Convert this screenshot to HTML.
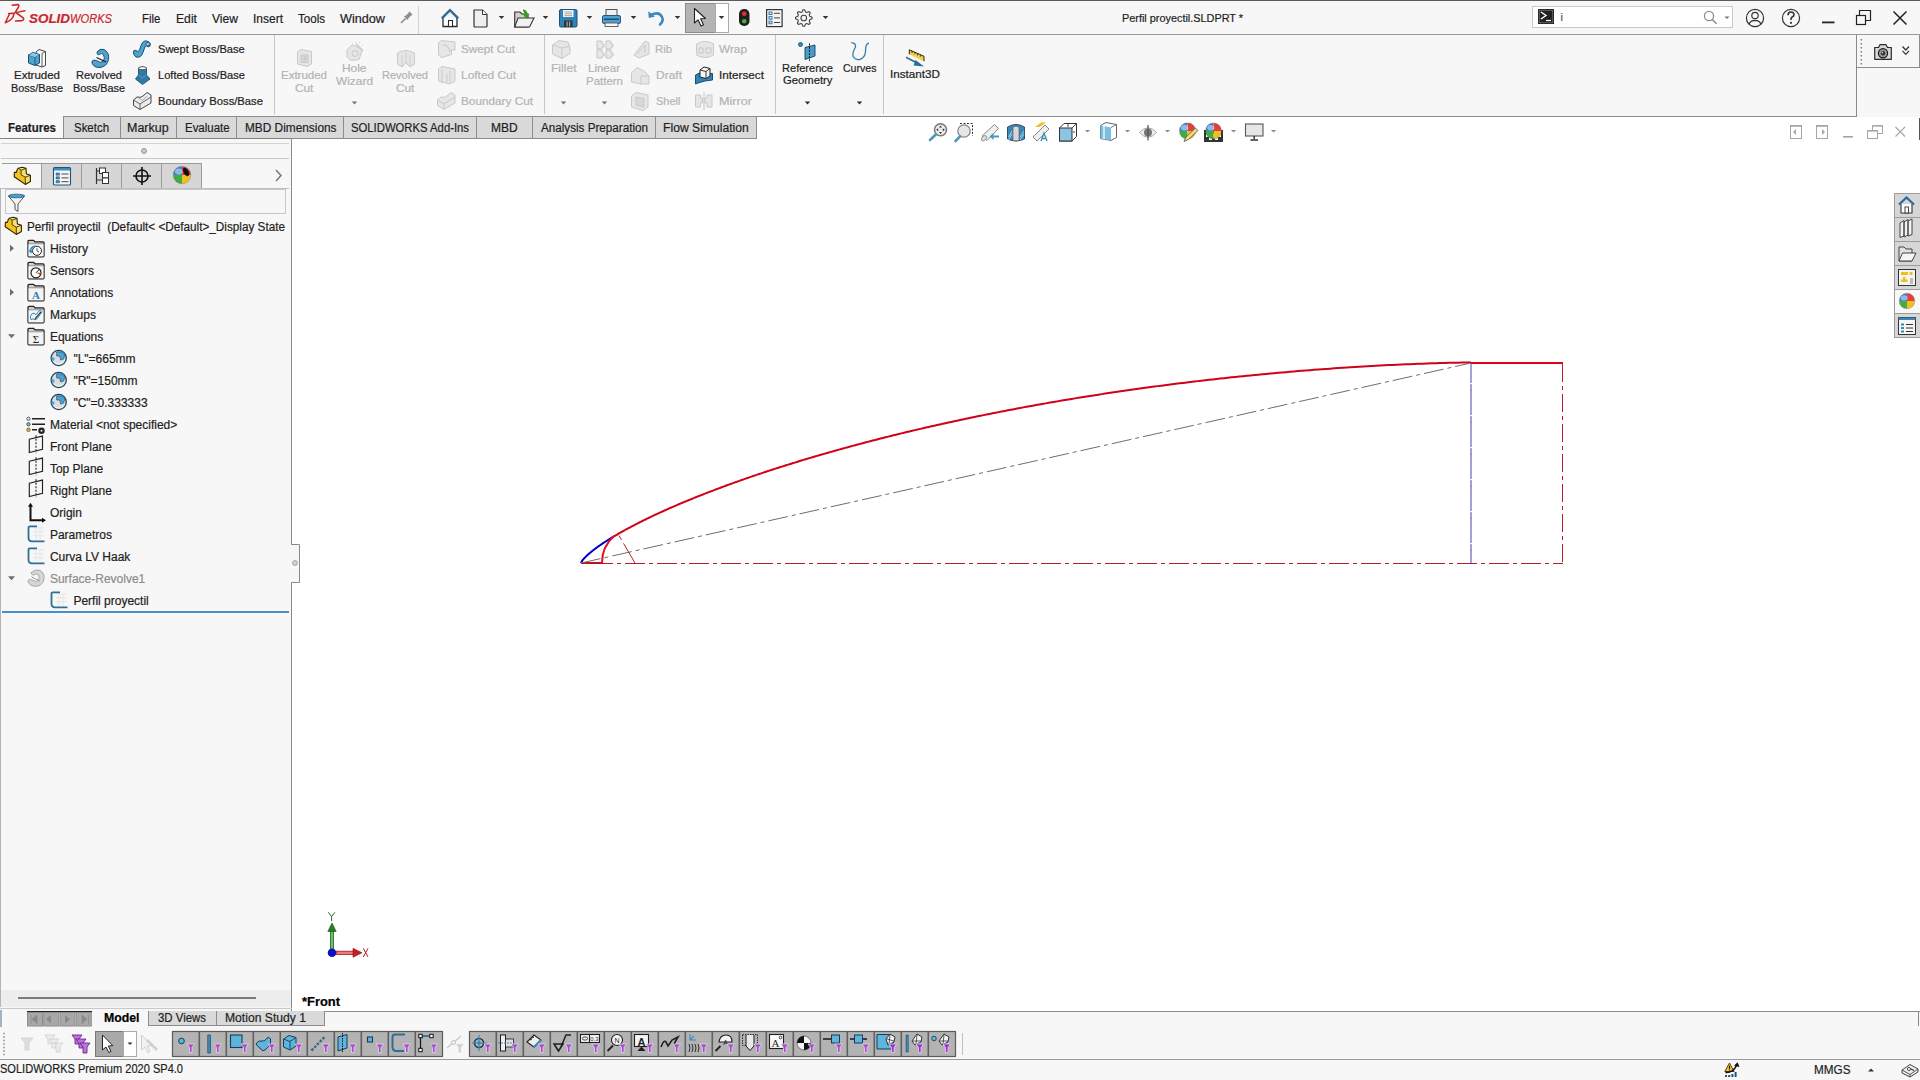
<!DOCTYPE html>
<html><head><meta charset="utf-8"><title>SOLIDWORKS</title>
<style>
html,body{margin:0;padding:0;width:1920px;height:1080px;overflow:hidden;background:#f7f7f7;font-family:"Liberation Sans",sans-serif}
.t{position:absolute;white-space:pre;line-height:1;transform-origin:0 0;font-family:"Liberation Sans",sans-serif;-webkit-text-stroke:0.2px currentColor}
svg{position:absolute;left:0;top:0}
</style></head><body>
<div style="position:absolute;left:0px;top:0px;width:1920px;height:35px;background:#f7f7f7"></div><div style="position:absolute;left:0px;top:0px;width:1920px;height:1px;background:#5a5a5a"></div><div style="position:absolute;left:0px;top:34px;width:1920px;height:1px;background:#9a9a9a"></div><div style="position:absolute;left:418px;top:6px;width:1px;height:28px;background:#d0d0d0"></div><div style="position:absolute;left:1532px;top:6px;width:201px;height:22px;background:#fff;border:1px solid #c8c8c8;box-sizing:border-box"></div><div style="position:absolute;left:0px;top:35px;width:1857px;height:82px;background:#f7f7f7"></div><div style="position:absolute;left:63px;top:116px;width:1794px;height:1px;background:#8a8a8a"></div><div style="position:absolute;left:1856px;top:35px;width:1px;height:82px;background:#8a8a8a"></div><div style="position:absolute;left:1857px;top:35px;width:63px;height:33px;background:#f7f7f7;border:1px solid #8c8c8c;border-top:none;border-left:none;box-sizing:border-box"></div><div style="position:absolute;left:274px;top:35px;width:1px;height:79px;background:#c6c6c6"></div><div style="position:absolute;left:544px;top:35px;width:1px;height:79px;background:#c6c6c6"></div><div style="position:absolute;left:775px;top:35px;width:1px;height:79px;background:#c6c6c6"></div><div style="position:absolute;left:883px;top:35px;width:1px;height:79px;background:#c6c6c6"></div><div style="position:absolute;left:0px;top:117px;width:292px;height:22px;background:#f7f7f7"></div><div style="position:absolute;left:292px;top:117px;width:1628px;height:22px;background:#fff"></div><div style="position:absolute;left:63px;top:116px;width:58px;height:23px;background:#d9d9d9;border:1px solid #8c8c8c;box-sizing:border-box"></div><div style="position:absolute;left:120px;top:116px;width:57px;height:23px;background:#d9d9d9;border:1px solid #8c8c8c;box-sizing:border-box"></div><div style="position:absolute;left:176px;top:116px;width:61px;height:23px;background:#d9d9d9;border:1px solid #8c8c8c;box-sizing:border-box"></div><div style="position:absolute;left:236px;top:116px;width:108px;height:23px;background:#d9d9d9;border:1px solid #8c8c8c;box-sizing:border-box"></div><div style="position:absolute;left:343px;top:116px;width:134px;height:23px;background:#d9d9d9;border:1px solid #8c8c8c;box-sizing:border-box"></div><div style="position:absolute;left:476px;top:116px;width:57px;height:23px;background:#d9d9d9;border:1px solid #8c8c8c;box-sizing:border-box"></div><div style="position:absolute;left:532px;top:116px;width:124px;height:23px;background:#d9d9d9;border:1px solid #8c8c8c;box-sizing:border-box"></div><div style="position:absolute;left:655px;top:116px;width:102px;height:23px;background:#d9d9d9;border:1px solid #8c8c8c;box-sizing:border-box"></div><div style="position:absolute;left:0px;top:138px;width:291px;height:1px;background:#7f7f7f"></div><div style="position:absolute;left:0px;top:139px;width:291px;height:872px;background:#f7f7f7"></div><div style="position:absolute;left:0px;top:188px;width:1px;height:819px;background:#b4b4b4"></div><div style="position:absolute;left:2px;top:163px;width:39px;height:1px;background:#9c9c9c"></div><div style="position:absolute;left:291px;top:139px;width:1px;height:872px;background:#8a8a8a"></div><div style="position:absolute;left:1px;top:143px;width:288px;height:1px;background:#d4d4d4"></div><div style="position:absolute;left:1px;top:158px;width:288px;height:1px;background:#c8c8c8"></div><div style="position:absolute;left:41px;top:163px;width:41px;height:26px;background:#d6d6d6;border:1px solid #9c9c9c;box-sizing:border-box"></div><div style="position:absolute;left:81px;top:163px;width:41px;height:26px;background:#d6d6d6;border:1px solid #9c9c9c;box-sizing:border-box"></div><div style="position:absolute;left:121px;top:163px;width:41px;height:26px;background:#d6d6d6;border:1px solid #9c9c9c;box-sizing:border-box"></div><div style="position:absolute;left:161px;top:163px;width:41px;height:26px;background:#d6d6d6;border:1px solid #9c9c9c;box-sizing:border-box"></div><div style="position:absolute;left:1px;top:188px;width:288px;height:1px;background:#c0c0c0"></div><div style="position:absolute;left:5px;top:189px;width:281px;height:25px;background:#f7f7f7;border:1px solid #c8c8c8;box-sizing:border-box"></div><div style="position:absolute;left:2px;top:611px;width:287px;height:2px;background:#4a90c8"></div><div style="position:absolute;left:1px;top:990px;width:290px;height:17px;background:#ededed"></div><div style="position:absolute;left:18px;top:997px;width:238px;height:2px;background:#7a7a7a"></div><div style="position:absolute;left:0px;top:1008px;width:292px;height:1px;background:#c8c8c8"></div><div style="position:absolute;left:292px;top:139px;width:1628px;height:873px;background:#fff"></div><div style="position:absolute;left:292px;top:1011px;width:1628px;height:1px;background:#8a8a8a"></div><div style="position:absolute;left:0px;top:1012px;width:1920px;height:19px;background:#f7f7f7"></div><div style="position:absolute;left:148px;top:1011px;width:69px;height:15px;background:#d9d9d9;border:1px solid #8c8c8c;border-top:none;box-sizing:border-box"></div><div style="position:absolute;left:216px;top:1011px;width:109px;height:15px;background:#d9d9d9;border:1px solid #8c8c8c;border-top:none;box-sizing:border-box"></div><div style="position:absolute;left:0px;top:1031px;width:1920px;height:28px;background:#f7f7f7"></div><div style="position:absolute;left:962px;top:1033px;width:1px;height:22px;background:#c0c0c0"></div><div style="position:absolute;left:0px;top:1059px;width:1920px;height:21px;background:#f7f7f7"></div><div style="position:absolute;left:0px;top:1059px;width:1920px;height:1px;background:#9a9a9a"></div>
<svg width="1920" height="1080" viewBox="0 0 1920 1080"><g fill="none" stroke="#c9282d" stroke-linecap="round" stroke-linejoin="round">
      <path d="M12.3 5.2 L17.8 4.6 Q19.4 5 18.6 6.8 L14.8 13.2" stroke-width="1.6"/>
      <path d="M8.6 13.4 L14 13.2 Q13.6 18 9.5 20.6 L5.3 22.8 L9.2 14.5" stroke-width="1.5"/>
      <path d="M16.5 12.4 L25 10.7" stroke-width="1.4"/>
      <path d="M16.6 13 L23.5 18.2 Q24 20 22 20.6 L15.5 21" stroke-width="1.6"/>
    </g><g transform="translate(400,11)"><path d="M1 12 L5.5 7.5" stroke="#8a8a8a" stroke-width="1.6"/><path d="M4 5.5 L7.5 9 L9 6.5 L12.5 3.5 L9.5 0.5 L6.5 4 Z" fill="#8f8f8f"/></g><g transform="translate(441,9)"><path d="M2 9 V17.5 H16 V9" fill="#fff" stroke="#2b2b2b" stroke-width="1.3"/>
      <path d="M0.8 9.3 L9 1.2 L17.2 9.3" fill="none" stroke="#2d6a98" stroke-width="2.4"/>
      <rect x="7.5" y="11.5" width="4" height="6" fill="#fff" stroke="#2b2b2b" stroke-width="1.1"/></g><g transform="translate(473,9)"><path d="M1 1 H9.5 L14 5.5 V17 Q14 18 13 18 H2 Q1 18 1 17 Z" fill="#efefef" stroke="#333" stroke-width="1.2"/><path d="M9.5 1 V5.5 H14" fill="#fff" stroke="#333" stroke-width="1"/></g><g transform="translate(514,9)"><path d="M0.7 3 H6 L8 5 H14 V18 H0.7 Z" fill="#cfcfcf" stroke="#333" stroke-width="1.1"/>
      <path d="M0.7 18 L4 9 H20 L15.5 18 Z" fill="#f2f2f2" stroke="#333" stroke-width="1.1"/>
      <path d="M9 0.5 Q13 0.5 13.5 5 L15.5 5 L12 9.5 L8.5 5 L10.5 5 Q10.2 2.5 9 2.3 Z" fill="#3b9a1b"/></g><g transform="translate(559,9)"><rect x="0.5" y="0.5" width="17.5" height="17.5" rx="1.5" fill="#2f83b8" stroke="#1d4f73" stroke-width="1"/>
      <rect x="4" y="1" width="10.5" height="7" fill="#f4f4f4"/><path d="M5.5 3 H13 M5.5 4.8 H13 M5.5 6.6 H13" stroke="#8a8a8a" stroke-width="0.7"/>
      <rect x="5" y="11.5" width="8.5" height="6.5" fill="#333"/><rect x="7.5" y="12.5" width="1.2" height="5" fill="#aaa"/><rect x="10" y="12.5" width="1.2" height="5" fill="#aaa"/></g><g transform="translate(602,9)"><rect x="4" y="0.5" width="11" height="7" fill="#f0f0f0" stroke="#555" stroke-width="1"/>
      <rect x="0.5" y="6.5" width="18" height="8" rx="1.5" fill="#4da0cf" stroke="#245a7e" stroke-width="1"/>
      <rect x="2" y="9.5" width="15" height="1.5" fill="#1d4d70"/>
      <rect x="3" y="14" width="13" height="3.5" fill="#f7f7f7" stroke="#555" stroke-width="0.9"/></g><g transform="translate(648,10)"><path d="M3 5 Q11 1 14 7 Q16 11 12 14.5" fill="none" stroke="#3b88c0" stroke-width="2.6" stroke-linecap="round"/><path d="M0.2 1.2 L0.8 8 L7 6.5 Z" fill="#3b88c0"/></g><rect x="685.5" y="3.5" width="30" height="29" fill="#b4b4b4" stroke="#8c8c8c" stroke-width="1"/><rect x="715.5" y="3.5" width="13" height="29" fill="#fff" stroke="#aaa" stroke-width="1"/><path d="M694.5 8.5 V23 L698 19.8 L701 26 L703.5 24.8 L700.6 18.8 L705.5 18.5 Z" fill="#fff" stroke="#222" stroke-width="1.1" stroke-linejoin="round"/><g transform="translate(739,9)"><rect x="0" y="0" width="10.5" height="17" rx="5" fill="#1f1f1f"/><circle cx="5.25" cy="4.8" r="2.3" fill="#e03030"/><circle cx="5.25" cy="12.2" r="2.3" fill="#3fb03f"/></g><g transform="translate(766,9)"><rect x="0.6" y="0.6" width="15.5" height="17" fill="#f4f4f4" stroke="#333" stroke-width="1.2"/>
      <rect x="3" y="3" width="3" height="2.6" fill="#d8e8f4" stroke="#2e6c9c" stroke-width="0.9"/><rect x="3" y="7.6" width="3" height="2.6" fill="#d8e8f4" stroke="#2e6c9c" stroke-width="0.9"/><rect x="3" y="12.2" width="3" height="2.6" fill="#d8e8f4" stroke="#2e6c9c" stroke-width="0.9"/>
      <path d="M8 4.3 H14 M8 8.9 H14 M8 13.5 H14" stroke="#444" stroke-width="1"/></g><polygon points="812.06,17.19 812.06,18.81 809.73,19.80 809.27,20.92 810.22,23.27 809.07,24.42 806.72,23.47 805.60,23.93 804.61,26.26 802.99,26.26 802.00,23.93 800.88,23.47 798.53,24.42 797.38,23.27 798.33,20.92 797.87,19.80 795.54,18.81 795.54,17.19 797.87,16.20 798.33,15.08 797.38,12.73 798.53,11.58 800.88,12.53 802.00,12.07 802.99,9.74 804.61,9.74 805.60,12.07 806.72,12.53 809.07,11.58 810.22,12.73 809.27,15.08 809.73,16.20" fill="#f4f4f4" stroke="#444" stroke-width="1.1" stroke-linejoin="round"/><circle cx="803.8" cy="18" r="2.8" fill="#f4f4f4" stroke="#444" stroke-width="1.1"/><path d="M498.7 16 H504.3 L501.5 19 Z" fill="#333"/><path d="M542.7 16 H548.3 L545.5 19 Z" fill="#333"/><path d="M586.7 16 H592.3 L589.5 19 Z" fill="#333"/><path d="M630.7 16 H636.3 L633.5 19 Z" fill="#333"/><path d="M674.7 16 H680.3 L677.5 19 Z" fill="#333"/><path d="M718.7 16 H724.3 L721.5 19 Z" fill="#333"/><path d="M822.7 16 H828.3 L825.5 19 Z" fill="#333"/><rect x="1538" y="9" width="16" height="15" fill="#222"/><rect x="1539.2" y="10.2" width="13.6" height="12.6" fill="none" stroke="#888" stroke-width="0.6"/><path d="M1541 12 L1546 15.5 L1541 19" fill="none" stroke="#fff" stroke-width="1.4"/><path d="M1546 20.5 H1551" stroke="#fff" stroke-width="1.2"/><circle cx="1709" cy="16" r="4.6" fill="none" stroke="#8a8a8a" stroke-width="1.3"/><path d="M1712.3 19.5 L1716.5 23.8" stroke="#8a8a8a" stroke-width="1.6"/><path d="M1724.5 16.5 H1729.5 L1727 19 Z" fill="#777"/><circle cx="1755" cy="18" r="8.6" fill="none" stroke="#333" stroke-width="1.2"/><circle cx="1755" cy="15.5" r="3.2" fill="none" stroke="#333" stroke-width="1.2"/><path d="M1749.2 24.3 Q1750 20.5 1755 20.3 Q1760 20.5 1760.8 24.3" fill="none" stroke="#333" stroke-width="1.2"/><circle cx="1791" cy="18" r="8.6" fill="none" stroke="#333" stroke-width="1.2"/><path d="M1788 15.3 Q1788 12 1791 12 Q1794 12 1794 14.8 Q1794 16.5 1791.5 17.6 Q1791 18.2 1791 20" fill="none" stroke="#333" stroke-width="1.6"/><circle cx="1791" cy="22.8" r="1.1" fill="#333"/><rect x="1822" y="21.5" width="12.5" height="1.8" fill="#222"/><rect x="1856.5" y="15.5" width="9" height="9" fill="none" stroke="#222" stroke-width="1.2"/><path d="M1859.5 15.5 V10.5 H1870.5 V20.5 H1865.5" fill="none" stroke="#222" stroke-width="1.2"/><path d="M1893.5 11.5 L1906.5 24.5 M1906.5 11.5 L1893.5 24.5" stroke="#222" stroke-width="1.5"/><g transform="translate(28,49)">
      <path d="M8 3 L11 0.5 L17.5 2.5 V16.5 L14 18 L8 16 Z" fill="#fafafa" stroke="#333" stroke-width="0.9"/>
      <path d="M14 4.5 L17.5 2.5 M14 4.5 V18" stroke="#333" stroke-width="0.8"/>
      <path d="M0.5 6 L5 3.5 L11.5 5.5 V14 L7 16.5 L0.5 14 Z" fill="#4fa3d1" stroke="#1d4e6d" stroke-width="1"/>
      <path d="M0.5 6 L7 8.2 L11.5 5.5 M7 8.2 V16.5" fill="none" stroke="#1d4e6d" stroke-width="0.9"/>
      <path d="M1 6.3 L7 8.2 L11 5.7 L5 3.8 Z" fill="#8cc8e8"/></g><g transform="translate(91,48)">
      <path d="M6 4 Q9 0 13 1.5 Q18.5 4.5 17.5 11.5 Q16 18.5 9 19.5 Q3 19.8 1 15 Q0.5 12.5 3 12 L6.5 13 Q9 15.5 12 13.5 Q14.5 10.5 12.5 6.5 Q10.5 4.5 8.5 6.5 Q6 7.5 6 4 Z" fill="#4fa3d1" stroke="#1d4e6d" stroke-width="1"/>
      <path d="M5.5 9.5 L15 14" stroke="#222" stroke-width="1.3"/></g><g transform="translate(132,40)">
      <path d="M1.5 11 Q3 9.5 5 11 Q6 13 7.5 10 Q9 5 10.5 2.5 Q12 0.5 14.5 1 L17 2 Q19 3.5 18 6 Q16.5 7.5 14.5 6 Q13.5 5 12.5 8 Q11 13 9.5 15.5 Q7.5 18 4 17 Q1 15 1.5 11 Z" fill="#4fa3d1" stroke="#1d4e6d" stroke-width="1"/>
      <ellipse cx="15.8" cy="4" rx="2" ry="1.7" fill="#8cc8e8" stroke="#1d4e6d" stroke-width="0.7"/></g><g transform="translate(135,66)">
      <path d="M3.5 2 Q7.5 0 11.5 2 V9 L15 13 L7.5 18.5 L0.5 13 L3.5 9 Z" fill="#2f7aa8" stroke="#1d4e6d" stroke-width="0.9"/>
      <path d="M3.5 9 L7.5 12 L11.5 9" fill="none" stroke="#5ea8d2" stroke-width="0.8"/>
      <ellipse cx="7.5" cy="2.2" rx="4" ry="1.5" fill="#fff" stroke="#333" stroke-width="0.8"/></g><g transform="translate(133,92)">
      <path d="M0.5 8 L4 5 Q8 6 10 4 L14 0.5 L18 3 V11 L7 17.5 L0.5 13.5 Z" fill="#ececec" stroke="#333" stroke-width="0.9"/>
      <path d="M0.5 8 L7 12 L18 5 M7 12 V17.5" fill="none" stroke="#444" stroke-width="0.8"/>
      <path d="M4 5 L9.5 8.5 Q12 6.5 14 4" fill="none" stroke="#888" stroke-width="0.7"/></g><g transform="translate(297,49)"><path d="M0.5 3 L4 0.5 L14.5 2.5 V15 L10.5 17.5 L0.5 15 Z" fill="#e6e6e6" stroke="#c9c9c9" stroke-width="1"/><rect x="4" y="6" width="7" height="7.5" fill="#d8d8d8" stroke="#c9c9c9"/><path d="M8 7 V11 H6" stroke="#c0c0c0" fill="none"/></g><g transform="translate(346,42)"><path d="M1 8 L6 3 L13 5.5 L16 9 L13 17.5 L5 18.5 L1 15 Z" fill="#e6e6e6" stroke="#c9c9c9" stroke-width="1"/><circle cx="9" cy="11.5" r="3" fill="none" stroke="#c8c8c8"/><path d="M10 2 L17 9" stroke="#cfcfcf" stroke-width="2"/><path d="M9 0.5 h1 M13 0.5 h1 M16 3 h1 M6 2 h1" stroke="#d0d0d0"/></g><g transform="translate(397,49)"><path d="M0.5 4 Q9 -1 17.5 4 V15 L13 18 L9 14 L5 18 L0.5 15 Z" fill="#e6e6e6" stroke="#c9c9c9" stroke-width="1"/><path d="M5 6 V18 M9 3.5 V14 M13 6 V18" stroke="#cdcdcd" fill="none"/></g><g transform="translate(438,40)"><path d="M0.5 3 L3 0.5 L17 2 V10 H13.5 V14.5 L3.5 17.5 L0.5 15 Z" fill="#e6e6e6" stroke="#c9c9c9" stroke-width="1"/><path d="M5 5 Q11 5 12 12" fill="none" stroke="#c8c8c8"/></g><g transform="translate(438,66)"><path d="M0.5 3 L4 0.5 L17 3 V15 L12 18 L0.5 15 Z" fill="#e6e6e6" stroke="#c9c9c9" stroke-width="1"/><path d="M4 3.5 V18 M9 8 V16 M12 5 V16" stroke="#cdcdcd" fill="none"/></g><g transform="translate(437,92)"><path d="M0.5 8 L4 5 Q8 6 10 4 L14 0.5 L18 3 V11 L7 17.5 L0.5 13.5 Z" fill="#e6e6e6" stroke="#c9c9c9" stroke-width="1"/><path d="M0.5 8 L7 12 L18 5 M7 12 V17.5" fill="none" stroke="#c9c9c9"/></g><g transform="translate(552,40)"><path d="M0.5 5 L7 0.5 L16 2 L18 8 V13.5 L10 18.5 L0.5 14 Z" fill="#e6e6e6" stroke="#c9c9c9" stroke-width="1"/><path d="M0.5 5 L10 8 L18 6 M10 8 V18.5" fill="none" stroke="#c9c9c9"/></g><g transform="translate(596,40)"><path d="M1 1 h5 v3 h2 v3 h-2 v2 h-5 Z M10 1 h5 v3 h2 v3 h-2 v2 h-5 Z M1 10 h5 v3 h2 v3 h-2 v2 h-5 Z M10 10 h5 v3 h2 v3 h-2 v2 h-5 Z" fill="#e8e8e8" stroke="#c6c6c6"/></g><g transform="translate(632,40)"><path d="M2 15 L13 1 L17 3 V14 L7 18 Z" fill="#e6e6e6" stroke="#c9c9c9" stroke-width="1"/><path d="M5 14 L13 5 V13" fill="none" stroke="#c8c8c8"/></g><g transform="translate(631,67)"><path d="M0.5 6 L6 0.5 L13 4 L18 9 V17 H10 L0.5 15 Z" fill="#e6e6e6" stroke="#c9c9c9" stroke-width="1"/><path d="M10 9 H18 M10 9 V17" stroke="#c9c9c9" fill="none"/></g><g transform="translate(631,92)"><path d="M0.5 4 L5 0.5 L17 3 V15 L12 18.5 L0.5 15 Z" fill="#e6e6e6" stroke="#c9c9c9" stroke-width="1"/><path d="M5 5 L13 6.5 V15 L5 13 Z" fill="#d8d8d8" stroke="#c9c9c9"/></g><g transform="translate(696,40)"><path d="M0.5 4 Q9 -1 17.5 4 V15 Q9 20 0.5 15 Z" fill="#e6e6e6" stroke="#c9c9c9" stroke-width="1"/><path d="M3 8 h4 v5 h-4 Z M10 8 h5 v5 h-5 Z" fill="none" stroke="#c6c6c6"/></g><g transform="translate(695,92)"><path d="M0.5 3 h5 v3 h2 v5 h-2 v4 h-5 Z M12 3 h5 v12 h-5 v-4 h-2 v-5 h2 Z" fill="#e6e6e6" stroke="#c9c9c9" stroke-width="1"/><path d="M9 0.5 V18" stroke="#c0c0c0"/></g><g transform="translate(695,66)">
      <path d="M0.5 9 L4.5 7 L17.5 7.5 V14 L10 15 L3 17 L0.5 18 Z" fill="#2f83b6" stroke="#143f5c" stroke-width="0.9"/>
      <path d="M5 4 L9 1 L15 2.5 V10 L11 12.5 L5 11 Z" fill="#f6f6f6" stroke="#222" stroke-width="1"/>
      <path d="M5 4 L11 5.5 L15 2.5 M11 5.5 V12.5" fill="none" stroke="#222" stroke-width="0.9"/></g><g transform="translate(798,42)">
      <circle cx="2.5" cy="2.5" r="2" fill="#3a8fc0" stroke="#123e5a" stroke-width="0.8"/>
      <path d="M7 5.5 L17 3 V14 L7 17.5 Z" fill="#4b9ccb" stroke="#123e5a" stroke-width="0.9"/>
      <path d="M11.5 1.5 V19" stroke="#111" stroke-width="1" stroke-dasharray="2 1.2"/></g><path d="M851.2 42.8 Q856 42.5 855.5 47 Q852.5 52 853 56 Q855 60 859.5 59.5 Q865 58.5 865.6 51 Q865.2 44 869 43.2" fill="none" stroke="#3a7ea6" stroke-width="1.3"/><path d="M909.3 49.8 L924 56.3 V61.2 L909.3 54.3 Z" fill="#f0d040"/><path d="M909.3 54.3 V49.8 L924 56.3 V61.2" fill="none" stroke="#2a2a10" stroke-width="1"/><path d="M912 51 v2 M914.8 52.2 v2 M917.6 53.5 v2 M920.4 54.7 v2" stroke="#2a2a10" stroke-width="0.8"/><path d="M906 57.2 L917.5 63.2" stroke="#2b6f98" stroke-width="1.6"/><path d="M915.5 60 L924 66.5 L913.6 65.4 Z" fill="#2b6f98"/><path d="M351.8 101.5 H357.2 L354.5 104.5 Z" fill="#777"/><path d="M560.8 101.5 H566.2 L563.5 104.5 Z" fill="#777"/><path d="M601.8 101.5 H607.2 L604.5 104.5 Z" fill="#777"/><path d="M804.8 101.5 H810.2 L807.5 104.5 Z" fill="#2e2e2e"/><path d="M856.8 101.5 H862.2 L859.5 104.5 Z" fill="#2e2e2e"/><rect x="1860.6" y="39" width="1.5" height="1.5" fill="#777"/><rect x="1860.6" y="43" width="1.5" height="1.5" fill="#777"/><rect x="1860.6" y="47" width="1.5" height="1.5" fill="#777"/><rect x="1860.6" y="51" width="1.5" height="1.5" fill="#777"/><rect x="1860.6" y="55" width="1.5" height="1.5" fill="#777"/><rect x="1860.6" y="59" width="1.5" height="1.5" fill="#777"/><rect x="1860.6" y="63" width="1.5" height="1.5" fill="#777"/><g transform="translate(1874,44)"><path d="M0.7 3.5 H4.5 L6 0.7 H12 L13.5 3.5 H17.3 V15.3 H0.7 Z" fill="#d8d8d8" stroke="#2a2a2a" stroke-width="1.2" stroke-linejoin="round"/><circle cx="9" cy="9.3" r="4.6" fill="#9a9a9a" stroke="#1a1a1a" stroke-width="1.2"/><circle cx="9" cy="9.3" r="2.2" fill="#333"/><circle cx="8.3" cy="8.6" r="0.8" fill="#ddd"/></g><path d="M1902.5 46.5 L1905.8 50 L1909 46.5 M1902.5 50.8 L1905.8 54.3 L1909 50.8" fill="none" stroke="#333" stroke-width="1.2"/><circle cx="144" cy="151" r="2.5" fill="#c8c8c8" stroke="#999" stroke-width="1"/><path d="M276 170 L281 175.5 L276 181" fill="none" stroke="#777" stroke-width="1.5"/><path d="M10 244.8 L14 248.3 L10 251.8 Z" fill="#6d6d6d"/><path d="M10 288.8 L14 292.3 L10 295.8 Z" fill="#6d6d6d"/><path d="M8 334.3 L15 334.3 L11.5 338.3 Z" fill="#6d6d6d"/><path d="M8 576.3 L15 576.3 L11.5 580.3 Z" fill="#6d6d6d"/><rect x="0" y="1010" width="2" height="17" fill="#9cb8bc"/><path d="M291 544.5 H299.5 V582.5 H291 Z" fill="#f7f7f7"/><path d="M291.5 544 V544.5 H299.5 V582.5 H291.5 V583" fill="none" stroke="#8a8a8a" stroke-width="1"/><circle cx="295" cy="563" r="2.5" fill="#d0d0d0" stroke="#999" stroke-width="0.8"/><g><circle cx="940.5" cy="129.8" r="6" fill="#ececec" stroke="#777" stroke-width="1.5"/>
      <path d="M930 140 L935.8 134.5" stroke="#4f97be" stroke-width="2.6" stroke-linecap="round"/>
      <path d="M940.5 125.5 l-1.5 2 h3 Z M940.5 134 l-1.5 -2 h3 Z M936.2 129.8 l2 -1.5 v3 Z M944.8 129.8 l-2 -1.5 v3 Z" fill="#333"/></g><g><path d="M960 123.5 H972.5 V136" fill="none" stroke="#333" stroke-width="1" stroke-dasharray="2 1.5"/>
      <circle cx="964" cy="131" r="6.2" fill="#e6e6e6" stroke="#888" stroke-width="1.3"/>
      <path d="M955.5 141 L960 136.5" stroke="#4f97be" stroke-width="2.6" stroke-linecap="round"/></g><g><path d="M982 136 L994.5 124.5 L998.5 128.5 L987 140.5 Z" fill="#efefef" stroke="#888" stroke-width="1"/>
      <ellipse cx="984" cy="138.3" rx="2" ry="3.2" transform="rotate(45 984 138.3)" fill="#ddd" stroke="#888" stroke-width="0.8"/>
      <path d="M999 135.5 H993.5 V133 L989.5 136.5 L993.5 140 V137.5 H999 Z" fill="#4f97be"/></g><g><path d="M1007.5 127 Q1016 122 1024.5 127 V139 Q1016 143 1007.5 139 Z" fill="#3a86b4" stroke="#2a4f66" stroke-width="1"/>
      <path d="M1013 127 Q1016 125.5 1019 127 V140.5 Q1016 141 1013 140.5 Z" fill="#d8d8d8" stroke="#666" stroke-width="0.7"/>
      <path d="M1008.5 137 L1012 131 M1008.5 140 L1012 134 M1020 137 L1024 131 M1020 140 L1024 134" stroke="#a8d4ee" stroke-width="1"/></g><g><path d="M1035 127 L1041 122.5 H1046 L1040 127 Z" fill="#f0c030"/>
      <path d="M1033 137 L1045 125 L1049 129 L1037 141 Z" fill="#efefef" stroke="#888" stroke-width="1"/>
      <path d="M1041 141 L1044 133 L1047 141 M1042.2 138.5 H1045.8" fill="none" stroke="#3e86b4" stroke-width="1.3"/></g><g><path d="M1059.5 128 L1064 123.5 H1076.5 V136.5 L1072 141 H1059.5 Z" fill="#fff" stroke="#333" stroke-width="1"/>
      <rect x="1059.5" y="128" width="12.5" height="13" fill="#8cc4e2" stroke="#333" stroke-width="1"/>
      <path d="M1072 128 L1076.5 123.5 M1068 124 V127 M1075 132 H1073" stroke="#333" stroke-width="0.9"/></g><g><path d="M1100.5 125.5 L1106 122.5 L1116.5 124.5 V137.5 L1111 140.5 L1100.5 138.5 Z" fill="#fff" stroke="#555" stroke-width="0.9"/>
      <path d="M1100.5 125.5 L1111 127.5 V140.5 L1100.5 138.5 Z" fill="#7fbde0"/>
      <path d="M1104 126 V139" stroke="#cbe6f4" stroke-width="2"/>
      <path d="M1111 127.5 L1116.5 124.5" stroke="#555" stroke-width="0.8"/></g><g><path d="M1139.5 132.5 Q1148 123 1156.5 132.5 Q1148 142 1139.5 132.5 Z" fill="#eee" stroke="#aaa" stroke-width="1"/>
      <circle cx="1148" cy="132.5" r="4" fill="#777"/><path d="M1148 125 V140.5" stroke="#555" stroke-width="1.2"/></g><g><clipPath id="bc1187131"><circle cx="1187.5" cy="131" r="8.2"/></clipPath>
      <g clip-path="url(#bc1187131)">
      <rect x="1179.3" y="122.8" width="8.2" height="8.2" fill="#3d7fd0"/>
      <rect x="1187.5" y="122.8" width="8.2" height="8.2" fill="#e04040"/>
      <rect x="1179.3" y="131" width="8.2" height="8.2" fill="#3fae3f"/>
      <rect x="1187.5" y="131" width="8.2" height="8.2" fill="#f0c020"/>
      <ellipse cx="1184.63" cy="127.72" rx="3.69" ry="2.8699999999999997" fill="#fff" opacity="0.45"/></g>
      <circle cx="1187.5" cy="131" r="8.2" fill="none" stroke="#555" stroke-width="0.5" opacity="0.6"/></g><path d="M1184 141.5 L1186 137 L1195.5 128 L1198 130.5 L1188.5 139.5 Z" fill="#f2d87a" stroke="#555" stroke-width="0.8"/><rect x="1204" y="130" width="19" height="12" fill="#333"/><path d="M1206 134 h3 v3 h-3 Z M1212 134 h3 v3 h-3 Z M1218 134 h3 v3 h-3 Z M1209 137 h3 v3 h-3 Z M1215 137 h3 v3 h-3 Z" fill="#fff"/><g><clipPath id="bc1213131"><circle cx="1213.5" cy="131" r="8"/></clipPath>
      <g clip-path="url(#bc1213131)">
      <rect x="1205.5" y="123" width="8" height="8" fill="#3d7fd0"/>
      <rect x="1213.5" y="123" width="8" height="8" fill="#e04040"/>
      <rect x="1205.5" y="131" width="8" height="8" fill="#3fae3f"/>
      <rect x="1213.5" y="131" width="8" height="8" fill="#f0c020"/>
      <ellipse cx="1210.7" cy="127.8" rx="3.6" ry="2.8" fill="#fff" opacity="0.45"/></g>
      <circle cx="1213.5" cy="131" r="8" fill="none" stroke="#555" stroke-width="0.5" opacity="0.6"/></g><g><rect x="1245.5" y="124" width="17.5" height="12" fill="#e6e6e6" stroke="#555" stroke-width="1.1"/>
      <path d="M1254.2 136 V139 M1250.5 140 H1258" stroke="#333" stroke-width="1.5"/></g><path d="M1084.9 130 H1090.1 L1087.5 132.5 Z" fill="#8a8a8a"/><path d="M1124.9 130 H1130.1 L1127.5 132.5 Z" fill="#8a8a8a"/><path d="M1164.9 130 H1170.1 L1167.5 132.5 Z" fill="#8a8a8a"/><path d="M1230.9 130 H1236.1 L1233.5 132.5 Z" fill="#8a8a8a"/><path d="M1270.9 130 H1276.1 L1273.5 132.5 Z" fill="#8a8a8a"/><rect x="1790.5" y="125.5" width="11" height="13" fill="none" stroke="#a6a6a6" stroke-width="1"/><rect x="1790.5" y="125" width="11" height="1.8" fill="#a6a6a6"/><path d="M1793 132 L1796 129 V135 Z" fill="#a6a6a6"/><rect x="1816.5" y="125.5" width="11" height="13" fill="none" stroke="#a6a6a6" stroke-width="1"/><rect x="1816.5" y="125" width="11" height="1.8" fill="#a6a6a6"/><path d="M1825 132 L1822 129 V135 Z" fill="#a6a6a6"/><rect x="1843" y="136" width="10" height="1.6" fill="#a6a6a6"/><path d="M1872.5 130 V125.5 H1882.5 V133.5 H1877.5" fill="none" stroke="#a6a6a6" stroke-width="1"/><rect x="1872.5" y="125" width="10" height="1.6" fill="#a6a6a6"/><rect x="1867.5" y="130.5" width="10" height="8" fill="none" stroke="#a6a6a6" stroke-width="1"/><rect x="1867.5" y="130" width="10" height="1.6" fill="#a6a6a6"/><path d="M1895.5 127 L1905 136.5 M1905 127 L1895.5 136.5" stroke="#a6a6a6" stroke-width="1.1"/><rect x="1919" y="118" width="1" height="22" fill="#555"/><rect x="1894.5" y="193.5" width="26" height="24" fill="#d6d6d6" stroke="#9c9c9c" stroke-width="1"/><rect x="1894.5" y="217.5" width="26" height="24" fill="#d6d6d6" stroke="#9c9c9c" stroke-width="1"/><rect x="1894.5" y="241.5" width="26" height="24" fill="#d6d6d6" stroke="#9c9c9c" stroke-width="1"/><rect x="1894.5" y="265.5" width="26" height="24" fill="#d6d6d6" stroke="#9c9c9c" stroke-width="1"/><rect x="1894.5" y="289.5" width="26" height="24" fill="#f8f8f8" stroke="#9c9c9c" stroke-width="1"/><rect x="1894.5" y="313.5" width="26" height="24" fill="#d6d6d6" stroke="#9c9c9c" stroke-width="1"/><g transform="translate(1898,196)"><path d="M3 8 V17 H14 V8" fill="#fff" stroke="#333" stroke-width="1.1"/><path d="M1 8.5 L8.5 1.5 L16 8.5" fill="none" stroke="#2d6a98" stroke-width="2.2"/><rect x="7" y="11" width="3.5" height="6" fill="#fff" stroke="#333" stroke-width="0.9"/></g><g transform="translate(1899,219)"><path d="M1 4 L5 1.5 V17 L1 18.5 Z M5 3 L9 0.5 V16 L5 18 Z M9 2 L13 0 V15.5 L9 17 Z" fill="#f2f2f2" stroke="#333" stroke-width="0.9"/></g><g transform="translate(1898,245)"><path d="M1 2 H6 L8 4 H14 V16 H1 Z" fill="#e0e0e0" stroke="#444" stroke-width="1"/><path d="M1 16 L4.5 8 H18 L14 16 Z" fill="#f6f6f6" stroke="#444" stroke-width="1"/></g><g transform="translate(1898,269)"><rect x="0.5" y="0.5" width="17" height="16" fill="#f4f4f4" stroke="#333" stroke-width="1"/><rect x="3" y="3" width="7" height="3" fill="#f0c020"/><rect x="11.5" y="3" width="3" height="3" fill="#f0c020"/><path d="M3 13 H9.5 V10.5 H7.5 V8 H5 V10.5 H3 Z" fill="#f0c020"/><rect x="12" y="9" width="3" height="6" fill="#bbb"/></g><g><clipPath id="bc1907301"><circle cx="1907" cy="301" r="7.8"/></clipPath>
      <g clip-path="url(#bc1907301)">
      <rect x="1899.2" y="293.2" width="7.8" height="7.8" fill="#3d7fd0"/>
      <rect x="1907" y="293.2" width="7.8" height="7.8" fill="#e04040"/>
      <rect x="1899.2" y="301" width="7.8" height="7.8" fill="#3fae3f"/>
      <rect x="1907" y="301" width="7.8" height="7.8" fill="#f0c020"/>
      <ellipse cx="1904.27" cy="297.88" rx="3.51" ry="2.73" fill="#fff" opacity="0.45"/></g>
      <circle cx="1907" cy="301" r="7.8" fill="none" stroke="#555" stroke-width="0.5" opacity="0.6"/></g><g transform="translate(1898,317)"><rect x="0.5" y="0.5" width="17" height="17" fill="#f6f6f6" stroke="#333" stroke-width="1"/><rect x="0.5" y="0.5" width="17" height="2.5" fill="#3a86b8"/><path d="M3 6.5 h3 v2 h-3 Z M3 10 h3 v2 h-3 Z M3 13.5 h3 v2 h-3 Z" fill="#3a86b8"/><path d="M8 7.5 H15 M8 11 H15 M8 14.5 H15" stroke="#333"/></g><g transform="translate(14,167)"><path d="M0.4 5.2 L2.4 5.4 L3.3 2.3 L4.4 1.2 L8.2 0.3 L12 1.4 L12.4 7 L14.2 7.4 L16.4 8.3 V14.6 L11.3 17.4 L0.2 9.7 Z" fill="#f4c41c"/>
      <path d="M7.1 3.2 L12 1.4 L12.4 7 L7.1 7.9 Z M11.3 10.1 L16.4 8.3 V14.6 L11.3 17.4 Z" fill="#f8df68"/>
      <path d="M4.4 1.2 L8.2 0.3 L12 1.4 L7.1 3.2 Z M7.1 7.9 L12.4 7 L16.4 8.3 L11.3 10.1 Z" fill="#fbe9a0"/>
      <path d="M0.4 5.2 L2.4 5.4 L3.3 2.3 L4.4 1.2 L8.2 0.3 L12 1.4 L12.4 7 L14.2 7.4 L16.4 8.3 V14.6 L11.3 17.4 L0.2 9.7 Z" fill="none" stroke="#2a2206" stroke-width="1.1" stroke-linejoin="round"/>
      <path d="M4.4 1.2 L7.1 3.2 L12 1.4 M7.1 3.2 V7.9 L11.3 10.1 V17.2 M11.3 10.1 L16.4 8.3" fill="none" stroke="#3a2e08" stroke-width="0.9"/></g><g transform="translate(53,167)"><rect x="0.5" y="0.5" width="17" height="17.5" rx="1" fill="#f6f6f6" stroke="#1f5478" stroke-width="1.1"/><rect x="1" y="1" width="16" height="2.5" fill="#3a8cc0"/><path d="M3 6 h3.5 v2.2 h-3.5 Z M3 9.8 h3.5 v2.2 h-3.5 Z M3 13.6 h3.5 v2.2 h-3.5 Z" fill="#3a8cc0" stroke="#1f5478" stroke-width="0.5"/><path d="M8.5 7 H15.5 M8.5 10.9 H15.5 M8.5 14.7 H15.5" stroke="#333" stroke-width="0.9"/></g><g transform="translate(95,167)"><path d="M1.5 1 V17 M1.5 4 H5 M1.5 13 H7" stroke="#333" stroke-width="1.2" fill="none"/><rect x="4.5" y="1" width="6" height="5.5" fill="#fff" stroke="#333" stroke-width="1"/><rect x="7.5" y="5.5" width="6" height="5.5" fill="#fff" stroke="#333" stroke-width="1"/><rect x="7.5" y="11" width="6" height="5.5" fill="#fff" stroke="#333" stroke-width="1"/></g><g><circle cx="142" cy="176" r="6" fill="none" stroke="#111" stroke-width="1.6"/><path d="M142 167 V185 M133 176 H151" stroke="#111" stroke-width="1.6"/></g><g><clipPath id="bc182175"><circle cx="182" cy="175" r="8.8"/></clipPath>
      <g clip-path="url(#bc182175)">
      <rect x="173.2" y="166.2" width="8.8" height="8.8" fill="#3d7fd0"/>
      <rect x="182" y="166.2" width="8.8" height="8.8" fill="#e04040"/>
      <rect x="173.2" y="175" width="8.8" height="8.8" fill="#3fae3f"/>
      <rect x="182" y="175" width="8.8" height="8.8" fill="#f0c020"/>
      <ellipse cx="178.92" cy="171.48" rx="3.9600000000000004" ry="3.08" fill="#fff" opacity="0.45"/></g>
      <circle cx="182" cy="175" r="8.8" fill="none" stroke="#555" stroke-width="0.5" opacity="0.6"/></g><ellipse cx="186" cy="172" rx="2.5" ry="4.5" transform="rotate(-30 186 172)" fill="#111"/><g transform="translate(8,194)"><path d="M0.5 2 H16.5 L10 10 V17.5 L7 15.5 V10 Z" fill="#f2f2f2" stroke="#444" stroke-width="0.9"/><ellipse cx="8.5" cy="2" rx="8" ry="1.8" fill="#4aa0d0" stroke="#1f5478" stroke-width="0.8"/></g><g transform="translate(5,217)"><path d="M0.4 5.2 L2.4 5.4 L3.3 2.3 L4.4 1.2 L8.2 0.3 L12 1.4 L12.4 7 L14.2 7.4 L16.4 8.3 V14.6 L11.3 17.4 L0.2 9.7 Z" fill="#f4c41c"/>
      <path d="M7.1 3.2 L12 1.4 L12.4 7 L7.1 7.9 Z M11.3 10.1 L16.4 8.3 V14.6 L11.3 17.4 Z" fill="#f8df68"/>
      <path d="M4.4 1.2 L8.2 0.3 L12 1.4 L7.1 3.2 Z M7.1 7.9 L12.4 7 L16.4 8.3 L11.3 10.1 Z" fill="#fbe9a0"/>
      <path d="M0.4 5.2 L2.4 5.4 L3.3 2.3 L4.4 1.2 L8.2 0.3 L12 1.4 L12.4 7 L14.2 7.4 L16.4 8.3 V14.6 L11.3 17.4 L0.2 9.7 Z" fill="none" stroke="#2a2206" stroke-width="1.1" stroke-linejoin="round"/>
      <path d="M4.4 1.2 L7.1 3.2 L12 1.4 M7.1 3.2 V7.9 L11.3 10.1 V17.2 M11.3 10.1 L16.4 8.3" fill="none" stroke="#3a2e08" stroke-width="0.9"/></g><g transform="translate(27,239.8)"><path d="M1 3 V1.5 Q1 0.5 2 0.5 H6.5 L8 2 H16 Q17 2 17 3 V16 Q17 17 16 17 H2 Q1 17 1 16 Z" fill="#d0d0d0" stroke="#222" stroke-width="1.3"/>
      <rect x="1.5" y="4" width="15" height="12.5" fill="#f4f4f4"/><path d="M1 4 H17" stroke="#666" stroke-width="0.6"/><circle cx="10" cy="11" r="4.5" fill="#fff" stroke="#222" stroke-width="1"/><path d="M10 8.5 V11 L12 12.5" stroke="#222" stroke-width="0.8" fill="none"/><path d="M3 12 Q4 6 9 6.5" fill="none" stroke="#2f8ac0" stroke-width="1.6"/><path d="M2 10.5 L4 14 L6 10.5 Z" fill="#2f8ac0"/></g><g transform="translate(27,261.8)"><path d="M1 3 V1.5 Q1 0.5 2 0.5 H6.5 L8 2 H16 Q17 2 17 3 V16 Q17 17 16 17 H2 Q1 17 1 16 Z" fill="#d0d0d0" stroke="#222" stroke-width="1.3"/>
      <rect x="1.5" y="4" width="15" height="12.5" fill="#f4f4f4"/><path d="M1 4 H17" stroke="#666" stroke-width="0.6"/><circle cx="9" cy="11" r="5" fill="#fff" stroke="#222" stroke-width="1.2"/><path d="M9 11 L12.5 7.5" stroke="#222" stroke-width="1"/><path d="M9 11 L13 13 A5 5 0 0 0 14 11 Z" fill="#d84020"/></g><g transform="translate(27,283.8)"><path d="M1 3 V1.5 Q1 0.5 2 0.5 H6.5 L8 2 H16 Q17 2 17 3 V16 Q17 17 16 17 H2 Q1 17 1 16 Z" fill="#d0d0d0" stroke="#222" stroke-width="1.3"/>
      <rect x="1.5" y="4" width="15" height="12.5" fill="#f4f4f4"/><path d="M1 4 H17" stroke="#666" stroke-width="0.6"/><text x="9" y="15.5" font-family="Liberation Serif" font-weight="bold" font-size="11" fill="#2f7fb0" text-anchor="middle">A</text></g><g transform="translate(27,305.8)"><path d="M1 3 V1.5 Q1 0.5 2 0.5 H6.5 L8 2 H16 Q17 2 17 3 V16 Q17 17 16 17 H2 Q1 17 1 16 Z" fill="#d0d0d0" stroke="#222" stroke-width="1.3"/>
      <rect x="1.5" y="4" width="15" height="12.5" fill="#f4f4f4"/><path d="M1 4 H17" stroke="#666" stroke-width="0.6"/><path d="M4 14 Q2 10 5 8 Q7 6 9 9 L12 5 Q14 4 15 6 L10 13 Q8 15 6 13 Z" fill="none" stroke="#2f8ac0" stroke-width="1"/><path d="M8 13 L14 6" stroke="#333" stroke-width="1.2"/></g><g transform="translate(27,327.8)"><path d="M1 3 V1.5 Q1 0.5 2 0.5 H6.5 L8 2 H16 Q17 2 17 3 V16 Q17 17 16 17 H2 Q1 17 1 16 Z" fill="#d0d0d0" stroke="#222" stroke-width="1.3"/>
      <rect x="1.5" y="4" width="15" height="12.5" fill="#f4f4f4"/><path d="M1 4 H17" stroke="#666" stroke-width="0.6"/><text x="9" y="15" font-family="Liberation Serif" font-size="11" fill="#222" text-anchor="middle">Σ</text></g><g><circle cx="58.7" cy="358.0" r="7.6" fill="#dcdcdc" stroke="#1a4560" stroke-width="1.3"/>
      <path d="M56.7 352.0 Q61.7 351.0 64.7 355.0 L63.7 359.0 L60.7 360.0 L59.7 356.0 L56.7 356.0 Z" fill="#4aa6d8" stroke="#1f5070" stroke-width="0.7"/>
      <path d="M51.7 357.0 L54.7 358.0 L53.7 361.0 L51.7 360.0 Z" fill="#4aa6d8"/>
      <path d="M53.7 362.0 Q58.7 366.0 63.7 362.0" fill="none" stroke="#fff" stroke-width="1" opacity="0.8"/></g><g><circle cx="58.7" cy="380.0" r="7.6" fill="#dcdcdc" stroke="#1a4560" stroke-width="1.3"/>
      <path d="M56.7 374.0 Q61.7 373.0 64.7 377.0 L63.7 381.0 L60.7 382.0 L59.7 378.0 L56.7 378.0 Z" fill="#4aa6d8" stroke="#1f5070" stroke-width="0.7"/>
      <path d="M51.7 379.0 L54.7 380.0 L53.7 383.0 L51.7 382.0 Z" fill="#4aa6d8"/>
      <path d="M53.7 384.0 Q58.7 388.0 63.7 384.0" fill="none" stroke="#fff" stroke-width="1" opacity="0.8"/></g><g><circle cx="58.7" cy="402.0" r="7.6" fill="#dcdcdc" stroke="#1a4560" stroke-width="1.3"/>
      <path d="M56.7 396.0 Q61.7 395.0 64.7 399.0 L63.7 403.0 L60.7 404.0 L59.7 400.0 L56.7 400.0 Z" fill="#4aa6d8" stroke="#1f5070" stroke-width="0.7"/>
      <path d="M51.7 401.0 L54.7 402.0 L53.7 405.0 L51.7 404.0 Z" fill="#4aa6d8"/>
      <path d="M53.7 406.0 Q58.7 410.0 63.7 406.0" fill="none" stroke="#fff" stroke-width="1" opacity="0.8"/></g><g transform="translate(26,416.8)"><circle cx="2.5" cy="2" r="1.7" fill="#ddd" stroke="#333" stroke-width="0.7"/><circle cx="2.5" cy="7.5" r="1.7" fill="#6ab8e0" stroke="#333" stroke-width="0.7"/><circle cx="2.5" cy="13" r="1.7" fill="#f0c020" stroke="#333" stroke-width="0.7"/><path d="M6 2 H19 M6 7.5 H19 M6 13 H11" stroke="#222" stroke-width="1.5"/><circle cx="15.5" cy="14" r="3.2" fill="#222"/><circle cx="15.5" cy="14" r="1" fill="#f7f7f7"/></g><g transform="translate(28.5,435.3)"><path d="M0.8 4 L14 0.8 V14 L0.8 17.2 Z" fill="#f7f7f7" stroke="#222" stroke-width="1.15"/>
      <path d="M7.5 0 V18" stroke="#222" stroke-width="1.1" stroke-dasharray="2 1.5"/></g><g transform="translate(28.5,457.3)"><path d="M0.8 4 L14 0.8 V14 L0.8 17.2 Z" fill="#f7f7f7" stroke="#222" stroke-width="1.15"/>
      <path d="M7.5 0 V18" stroke="#222" stroke-width="1.1" stroke-dasharray="2 1.5"/></g><g transform="translate(28.5,479.3)"><path d="M0.8 4 L14 0.8 V14 L0.8 17.2 Z" fill="#f7f7f7" stroke="#222" stroke-width="1.15"/>
      <path d="M7.5 0 V18" stroke="#222" stroke-width="1.1" stroke-dasharray="2 1.5"/></g><g><path d="M30.5 505.79999999999995 V520.3 H43" stroke="#111" stroke-width="2" fill="none"/><path d="M28 506.79999999999995 L30.5 502.79999999999995 L33 506.79999999999995 Z M42 517.8 L46 520.3 L42 522.8 Z" fill="#111"/></g><g transform="translate(27,524.8)"><path d="M6 3 H17 M6 7 H17 M6 11 H17 M9 3 V15 M13 3 V15" stroke="#e2e2e2" stroke-width="0.8"/>
      <path d="M10 1.5 H3 Q1.5 1.5 1.5 3 V13 Q1.5 16.5 5 16.5 H17.5" fill="none" stroke="#2f6f96" stroke-width="1.8"/></g><g transform="translate(27,546.8)"><path d="M6 3 H17 M6 7 H17 M6 11 H17 M9 3 V15 M13 3 V15" stroke="#e2e2e2" stroke-width="0.8"/>
      <path d="M10 1.5 H3 Q1.5 1.5 1.5 3 V13 Q1.5 16.5 5 16.5 H17.5" fill="none" stroke="#2f6f96" stroke-width="1.8"/></g><g transform="translate(27,568.8)"><path d="M4 4 Q8 0 13 1.5 Q18 4.5 17 10.5 Q15.5 17 9 17.5 Q3 17.5 1 13 Q0.5 11 2.5 10.5 L6 11.5 Q8.5 13.5 11 12 Q13 9.5 11.5 6 Q9.5 4 7.5 6 Q4.5 7 4 4 Z" fill="#d6d6d6" stroke="#a8a8a8" stroke-width="1"/><path d="M4.5 8 L13 12.5" stroke="#999" stroke-width="1"/></g><g transform="translate(50,590.8)"><path d="M6 3 H17 M6 7 H17 M6 11 H17 M9 3 V15 M13 3 V15" stroke="#e2e2e2" stroke-width="0.8"/>
      <path d="M10 1.5 H3 Q1.5 1.5 1.5 3 V13 Q1.5 16.5 5 16.5 H17.5" fill="none" stroke="#2f6f96" stroke-width="1.8"/></g><rect x="172.5" y="1031.5" width="270" height="25" fill="#b3b3b3" stroke="#5a5a5a" stroke-width="1.2"/><rect x="198.5" y="1032" width="1.6" height="24" fill="#606060"/><rect x="225.5" y="1032" width="1.6" height="24" fill="#606060"/><rect x="252.5" y="1032" width="1.6" height="24" fill="#606060"/><rect x="279.5" y="1032" width="1.6" height="24" fill="#606060"/><rect x="306.5" y="1032" width="1.6" height="24" fill="#606060"/><rect x="333.5" y="1032" width="1.6" height="24" fill="#606060"/><rect x="360.5" y="1032" width="1.6" height="24" fill="#606060"/><rect x="387.5" y="1032" width="1.6" height="24" fill="#606060"/><rect x="414.5" y="1032" width="1.6" height="24" fill="#606060"/><rect x="469.5" y="1031.5" width="486" height="25" fill="#b3b3b3" stroke="#5a5a5a" stroke-width="1.2"/><rect x="495.5" y="1032" width="1.6" height="24" fill="#606060"/><rect x="522.5" y="1032" width="1.6" height="24" fill="#606060"/><rect x="549.5" y="1032" width="1.6" height="24" fill="#606060"/><rect x="576.5" y="1032" width="1.6" height="24" fill="#606060"/><rect x="603.5" y="1032" width="1.6" height="24" fill="#606060"/><rect x="630.5" y="1032" width="1.6" height="24" fill="#606060"/><rect x="657.5" y="1032" width="1.6" height="24" fill="#606060"/><rect x="684.5" y="1032" width="1.6" height="24" fill="#606060"/><rect x="711.5" y="1032" width="1.6" height="24" fill="#606060"/><rect x="738.5" y="1032" width="1.6" height="24" fill="#606060"/><rect x="765.5" y="1032" width="1.6" height="24" fill="#606060"/><rect x="792.5" y="1032" width="1.6" height="24" fill="#606060"/><rect x="819.5" y="1032" width="1.6" height="24" fill="#606060"/><rect x="846.5" y="1032" width="1.6" height="24" fill="#606060"/><rect x="873.5" y="1032" width="1.6" height="24" fill="#606060"/><rect x="900.5" y="1032" width="1.6" height="24" fill="#606060"/><rect x="927.5" y="1032" width="1.6" height="24" fill="#606060"/><g transform="translate(172,1031)"><circle cx="9.5" cy="10" r="2.8" fill="#5eb4dc" stroke="#143e5a" stroke-width="1"/></g><path d="M187 1044 H194.5 L192 1047.5 V1052.5 H189.5 V1047.5 Z" fill="#a64fc4" stroke="#f3dcff" stroke-width="0.7"/><g transform="translate(199,1031)"><rect x="8.8" y="4" width="2.6" height="18" fill="#3a8ab8" stroke="#143e5a" stroke-width="0.6"/></g><path d="M214 1044 H221.5 L219 1047.5 V1052.5 H216.5 V1047.5 Z" fill="#a64fc4" stroke="#f3dcff" stroke-width="0.7"/><g transform="translate(226,1031)"><rect x="4.5" y="4" width="11.5" height="12.5" fill="#5eb4dc" stroke="#143e5a" stroke-width="1.1"/></g><path d="M241 1044 H248.5 L246 1047.5 V1052.5 H243.5 V1047.5 Z" fill="#a64fc4" stroke="#f3dcff" stroke-width="0.7"/><g transform="translate(253,1031)"><path d="M3 13 Q5 9 9 10 Q12 11 14 7 Q16 5 17.5 8 Q18 11 17 14 Q14 17 12 19 Q9 21 8 18 Q5 16 3 13 Z" fill="#5eb4dc" stroke="#143e5a" stroke-width="1"/></g><path d="M268 1044 H275.5 L273 1047.5 V1052.5 H270.5 V1047.5 Z" fill="#a64fc4" stroke="#f3dcff" stroke-width="0.7"/><g transform="translate(280,1031)"><path d="M3.5 8 L9 4.5 L16 6.5 V15 L10 19 L3.5 16 Z" fill="#5eb4dc" stroke="#143e5a" stroke-width="1"/><path d="M3.5 8 L10 10.5 L16 6.5 M10 10.5 V19" fill="none" stroke="#143e5a" stroke-width="0.9"/></g><path d="M295 1044 H302.5 L300 1047.5 V1052.5 H297.5 V1047.5 Z" fill="#a64fc4" stroke="#f3dcff" stroke-width="0.7"/><g transform="translate(307,1031)"><path d="M4.5 19.5 L18 5.5" stroke="#143e5a" stroke-width="2" stroke-dasharray="2.5 1.5"/><path d="M4.5 19.5 L18 5.5" stroke="#5eb4dc" stroke-width="0.8" stroke-dasharray="2.5 1.5"/></g><path d="M322 1044 H329.5 L327 1047.5 V1052.5 H324.5 V1047.5 Z" fill="#a64fc4" stroke="#f3dcff" stroke-width="0.7"/><g transform="translate(334,1031)"><path d="M4 6 L13 3.5 V17 L4 20 Z" fill="#5eb4dc" stroke="#143e5a" stroke-width="1"/><path d="M8.5 2 V22" stroke="#111" stroke-width="1" stroke-dasharray="1.5 1"/></g><path d="M349 1044 H356.5 L354 1047.5 V1052.5 H351.5 V1047.5 Z" fill="#a64fc4" stroke="#f3dcff" stroke-width="0.7"/><g transform="translate(361,1031)"><rect x="6.5" y="6" width="5" height="5" fill="#5eb4dc" stroke="#143e5a" stroke-width="1.1"/></g><path d="M376 1044 H383.5 L381 1047.5 V1052.5 H378.5 V1047.5 Z" fill="#a64fc4" stroke="#f3dcff" stroke-width="0.7"/><g transform="translate(388,1031)"><path d="M17 3.5 H7 Q4.5 3.5 4.5 6 V16 Q4.5 20 8.5 20 H16" fill="none" stroke="#2f6f96" stroke-width="2"/></g><path d="M403 1044 H410.5 L408 1047.5 V1052.5 H405.5 V1047.5 Z" fill="#a64fc4" stroke="#f3dcff" stroke-width="0.7"/><g transform="translate(415,1031)"><path d="M5.5 5 H16.5 M5.5 5 V19" stroke="#111" stroke-width="1.2"/><path d="M5.5 5 H16.5" stroke="#2f7fb0" stroke-width="1.6"/><rect x="3.8" y="3.3" width="3.4" height="3.4" fill="#fff" stroke="#111" stroke-width="1"/><rect x="14.8" y="3.3" width="3.4" height="3.4" fill="#fff" stroke="#111" stroke-width="1"/><rect x="3.8" y="17.3" width="3.4" height="3.4" fill="#fff" stroke="#111" stroke-width="1"/></g><path d="M430 1044 H437.5 L435 1047.5 V1052.5 H432.5 V1047.5 Z" fill="#a64fc4" stroke="#f3dcff" stroke-width="0.7"/><g transform="translate(469,1031)"><circle cx="10" cy="12" r="4.5" fill="none" stroke="#143e5a" stroke-width="1.6"/><circle cx="10" cy="12" r="1.8" fill="#3a8ab8"/><path d="M10 4 V20 M3 12 H18" stroke="#3a8ab8" stroke-width="1.2"/></g><path d="M484 1044 H491.5 L489 1047.5 V1052.5 H486.5 V1047.5 Z" fill="#a64fc4" stroke="#f3dcff" stroke-width="0.7"/><g transform="translate(496,1031)"><rect x="4.5" y="4" width="5" height="16" fill="#f0f0f0" stroke="#1f1f1f" stroke-width="1"/><rect x="9.5" y="8" width="8" height="8" fill="#e0e0e0" stroke="#1f1f1f" stroke-width="0.8"/><path d="M2 12 H20" stroke="#3a8ab8" stroke-width="1" stroke-dasharray="2 1"/></g><path d="M511 1044 H518.5 L516 1047.5 V1052.5 H513.5 V1047.5 Z" fill="#a64fc4" stroke="#f3dcff" stroke-width="0.7"/><g transform="translate(523,1031)"><path d="M4 11 L11 4 L18 9 L11 16 Z" fill="#f0f0f0" stroke="#1f1f1f" stroke-width="1.1"/><path d="M11 16 L18 9" stroke="#3a8ab8" stroke-width="2"/><path d="M7 9 l2 -1 M9 7 l2 -1" stroke="#1f1f1f"/></g><path d="M538 1044 H545.5 L543 1047.5 V1052.5 H540.5 V1047.5 Z" fill="#a64fc4" stroke="#f3dcff" stroke-width="0.7"/><g transform="translate(550,1031)"><path d="M4 13 L8.5 20 L13 13 Z M10.5 17 L16 4 H21" fill="none" stroke="#1f1f1f" stroke-width="1.5"/></g><path d="M565 1044 H572.5 L570 1047.5 V1052.5 H567.5 V1047.5 Z" fill="#a64fc4" stroke="#f3dcff" stroke-width="0.7"/><g transform="translate(577,1031)"><rect x="3.5" y="3.5" width="9" height="8" fill="#f4f4f4" stroke="#1f1f1f" stroke-width="1.1"/><rect x="12.5" y="3.5" width="10" height="8" fill="#f4f4f4" stroke="#1f1f1f" stroke-width="1.1"/><rect x="5.5" y="6" width="5" height="3" rx="1.5" fill="none" stroke="#1f1f1f" stroke-width="0.8"/><text x="17.5" y="10" font-family="Liberation Sans" font-size="6" text-anchor="middle" fill="#1f1f1f">0.3</text></g><path d="M592 1044 H599.5 L597 1047.5 V1052.5 H594.5 V1047.5 Z" fill="#a64fc4" stroke="#f3dcff" stroke-width="0.7"/><g transform="translate(604,1031)"><circle cx="13" cy="9" r="5.5" fill="#f4f4f4" stroke="#1f1f1f" stroke-width="1.1"/><text x="13" y="11.5" font-family="Liberation Sans" font-size="7" text-anchor="middle" fill="#1f1f1f">N</text><path d="M3.5 20 L9 14.5" stroke="#1f1f1f" stroke-width="1.8"/></g><path d="M619 1044 H626.5 L624 1047.5 V1052.5 H621.5 V1047.5 Z" fill="#a64fc4" stroke="#f3dcff" stroke-width="0.7"/><g transform="translate(631,1031)"><rect x="3.5" y="3.5" width="14" height="12" fill="#f4f4f4" stroke="#1f1f1f" stroke-width="1.1"/><text x="10.5" y="14.5" font-family="Liberation Sans" font-weight="bold" font-size="11" text-anchor="middle" fill="#1f1f1f">A</text><path d="M6.5 20 L10.5 15.5 L14.5 20 Z" fill="#1f1f1f"/></g><path d="M646 1044 H653.5 L651 1047.5 V1052.5 H648.5 V1047.5 Z" fill="#a64fc4" stroke="#f3dcff" stroke-width="0.7"/><g transform="translate(658,1031)"><path d="M3 16 Q6 8 8 11 L10 15 L14 9 L20 6 L16 13" fill="none" stroke="#1f1f1f" stroke-width="1.6"/></g><path d="M673 1044 H680.5 L678 1047.5 V1052.5 H675.5 V1047.5 Z" fill="#a64fc4" stroke="#f3dcff" stroke-width="0.7"/><g transform="translate(685,1031)"><path d="M5 3 V9 H11 M5 9 L9 5" fill="none" stroke="#3a8ab8" stroke-width="1.1"/><path d="M4 13 q2 4 0 8 M7 13 q2 4 0 8 M10 13 q2 4 0 8 M13 13 q2 4 0 8" fill="none" stroke="#1f1f1f" stroke-width="0.9"/></g><path d="M700 1044 H707.5 L705 1047.5 V1052.5 H702.5 V1047.5 Z" fill="#a64fc4" stroke="#f3dcff" stroke-width="0.7"/><g transform="translate(712,1031)"><path d="M7 11 Q8 4 14 4 Q20 4 20 11 Z" fill="#f4f4f4" stroke="#1f1f1f" stroke-width="1.1"/><text x="13.5" y="14" font-family="Liberation Sans" font-size="7" text-anchor="middle" fill="#1f1f1f">A</text><path d="M3.5 20 L8.5 15" stroke="#1f1f1f" stroke-width="1.8"/></g><path d="M727 1044 H734.5 L732 1047.5 V1052.5 H729.5 V1047.5 Z" fill="#a64fc4" stroke="#f3dcff" stroke-width="0.7"/><g transform="translate(739,1031)"><rect x="3.5" y="3.5" width="15" height="11" fill="none" stroke="#1f1f1f" stroke-width="0.9" stroke-dasharray="1.5 1"/><path d="M7 4 V15 L11 19.5 L15 15 V4" fill="#e8e8e8" stroke="#1f1f1f" stroke-width="1"/></g><path d="M754 1044 H761.5 L759 1047.5 V1052.5 H756.5 V1047.5 Z" fill="#a64fc4" stroke="#f3dcff" stroke-width="0.7"/><g transform="translate(766,1031)"><rect x="3.5" y="3.5" width="14" height="14" fill="#fafafa" stroke="#1f1f1f" stroke-width="1.1"/><text x="9.5" y="15.5" font-family="Liberation Serif" font-size="11" text-anchor="middle" fill="#1f1f1f">A</text><circle cx="14.5" cy="6.5" r="1.3" fill="none" stroke="#1f1f1f" stroke-width="0.8"/></g><path d="M781 1044 H788.5 L786 1047.5 V1052.5 H783.5 V1047.5 Z" fill="#a64fc4" stroke="#f3dcff" stroke-width="0.7"/><g transform="translate(793,1031)"><circle cx="11" cy="12" r="7" fill="#f4f4f4" stroke="#555" stroke-width="0.8"/><path d="M11 12 V5 A7 7 0 0 0 4 12 Z M11 12 V19 A7 7 0 0 0 18 12 Z" fill="#111"/></g><path d="M808 1044 H815.5 L813 1047.5 V1052.5 H810.5 V1047.5 Z" fill="#a64fc4" stroke="#f3dcff" stroke-width="0.7"/><g transform="translate(820,1031)"><path d="M3 8 H12" stroke="#1f1f1f" stroke-width="1.6"/><rect x="11.5" y="4" width="8" height="8" fill="#5eb4dc" stroke="#143e5a" stroke-width="1"/></g><path d="M835 1044 H842.5 L840 1047.5 V1052.5 H837.5 V1047.5 Z" fill="#a64fc4" stroke="#f3dcff" stroke-width="0.7"/><g transform="translate(847,1031)"><path d="M3 8 H20" stroke="#1f1f1f" stroke-width="1.6"/><rect x="7.5" y="4" width="8" height="8" fill="#5eb4dc" stroke="#143e5a" stroke-width="1"/></g><path d="M862 1044 H869.5 L867 1047.5 V1052.5 H864.5 V1047.5 Z" fill="#a64fc4" stroke="#f3dcff" stroke-width="0.7"/><g transform="translate(874,1031)"><path d="M3 3.5 H15 L19 8 V18 H3 Z" fill="#5eb4dc" stroke="#143e5a" stroke-width="1"/><path d="M12 8 L16 3 L21 6 L20 11 L14 14 Z" fill="#f0f0f0" stroke="#1f1f1f" stroke-width="0.9"/><path d="M13 8 L20 10 M16 4 L15 13" stroke="#1f1f1f" stroke-width="0.7"/></g><path d="M889 1044 H896.5 L894 1047.5 V1052.5 H891.5 V1047.5 Z" fill="#9a2fcf" stroke="#f3dcff" stroke-width="0.7"/><g transform="translate(901,1031)"><rect x="5" y="4" width="2.2" height="17" fill="#3a8ab8" stroke="#143e5a" stroke-width="0.5"/><path d="M11 10 L16 3 L21 6 L20 11 L14 14 Z" fill="#f0f0f0" stroke="#1f1f1f" stroke-width="0.9"/><path d="M12 10 L20 10 M16 4 L15 13" stroke="#1f1f1f" stroke-width="0.7"/></g><path d="M916 1044 H923.5 L921 1047.5 V1052.5 H918.5 V1047.5 Z" fill="#9a2fcf" stroke="#f3dcff" stroke-width="0.7"/><g transform="translate(928,1031)"><circle cx="6" cy="7.5" r="2.3" fill="#5eb4dc" stroke="#143e5a" stroke-width="0.9"/><path d="M11 10 L16 3 L21 6 L20 11 L14 14 Z" fill="#f0f0f0" stroke="#1f1f1f" stroke-width="0.9"/><path d="M12 10 L20 10 M16 4 L15 13" stroke="#1f1f1f" stroke-width="0.7"/></g><path d="M943 1044 H950.5 L948 1047.5 V1052.5 H945.5 V1047.5 Z" fill="#9a2fcf" stroke="#f3dcff" stroke-width="0.7"/><path d="M447 1048 L461 1036" stroke="#c8c8c8" stroke-width="1.3"/><circle cx="453.5" cy="1042.5" r="2" fill="#f0f0f0" stroke="#c0c0c0"/><path d="M456 1044 H463.5 L461 1047.5 V1052.5 H458.5 V1047.5 Z" fill="#cfcfcf" stroke="#e8e8e8" stroke-width="0.7"/><circle cx="4" cy="1033.5" r="0.9" fill="#999"/><circle cx="4" cy="1037.0" r="0.9" fill="#999"/><circle cx="4" cy="1040.5" r="0.9" fill="#999"/><circle cx="4" cy="1044.0" r="0.9" fill="#999"/><circle cx="4" cy="1047.5" r="0.9" fill="#999"/><circle cx="4" cy="1051.0" r="0.9" fill="#999"/><circle cx="4" cy="1054.5" r="0.9" fill="#999"/><path d="M21 1038 H33 L29 1043 V1050 H25 V1043 Z" fill="#dedede" stroke="#cfcfcf" stroke-width="0.8"/><g fill="#ececec" stroke="#cfcfcf" stroke-width="0.8"><path d="M45 1035 H55 L52 1039 V1044 H48 V1039 Z"/><path d="M49 1039 H59 L56 1043 V1048 H52 V1043 Z"/><path d="M53 1043 H63 L60 1047 V1052 H56 V1043 Z"/></g><g fill="#c070e0" stroke="#6a2a8a" stroke-width="0.9"><path d="M72 1035 H82 L79 1039 V1044 H75 V1039 Z"/><path d="M76 1039 H86 L83 1043 V1048 H79 V1043 Z"/><path d="M80 1043 H90 L87 1047 V1053 H83 V1047 Z"/></g><rect x="95.5" y="1031.5" width="28" height="25" fill="#a9a9a9" stroke="#777" stroke-width="1"/><rect x="123.5" y="1031.5" width="13" height="25" fill="#fff" stroke="#aaa" stroke-width="1"/><path d="M102.5 1035 V1050 L106 1047 L108.8 1052.5 L111 1051.4 L108.3 1046 L112.8 1045.6 Z" fill="#fff" stroke="#222" stroke-width="1" stroke-linejoin="round"/><path d="M127.5 1042.5 H132.5 L130 1045 Z" fill="#333"/><path d="M141.5 1035 V1050 L145 1047 L147.8 1052.5 L150 1051.4 L147.3 1046 L151.8 1045.6 Z" fill="#f2f2f2" stroke="#cfcfcf" stroke-width="1"/><path d="M147 1040 L157 1050" stroke="#cfcfcf" stroke-width="2.5"/><rect x="27" y="1011" width="65" height="1.5" fill="#222"/><rect x="27.5" y="1012.5" width="15" height="13.5" fill="#a8a8a8" stroke="#8c8c8c" stroke-width="1"/><rect x="43.75" y="1012.5" width="15" height="13.5" fill="#a8a8a8" stroke="#8c8c8c" stroke-width="1"/><rect x="60.0" y="1012.5" width="15" height="13.5" fill="#a8a8a8" stroke="#8c8c8c" stroke-width="1"/><rect x="76.25" y="1012.5" width="15" height="13.5" fill="#a8a8a8" stroke="#8c8c8c" stroke-width="1"/><path d="M31 1015 V1023.5 M37 1015 L32 1019.2 L37 1023.5 Z" fill="#8a8a8a" stroke="#8a8a8a" stroke-width="0.8"/><path d="M51 1015 L46 1019.2 L51 1023.5 Z" fill="#8a8a8a"/><path d="M65 1015 L70 1019.2 L65 1023.5 Z" fill="#8a8a8a"/><path d="M82 1015 L87 1019.2 L82 1023.5 Z M88.5 1015 V1023.5" fill="#8a8a8a" stroke="#8a8a8a" stroke-width="0.8"/><g transform="translate(1724,1062)"><path d="M0.8 9.5 L5.5 1 L10.2 9.5 Z" fill="#f2c21a" stroke="#333" stroke-width="0.9" stroke-linejoin="round"/><path d="M5.5 3.8 V6.8 M5.5 7.6 V8.6" stroke="#111" stroke-width="1.1"/><path d="M1.5 10.5 Q9 11 12.5 3.5" fill="none" stroke="#111" stroke-width="1.6"/><path d="M10 3.8 L13.5 0.2 L15.5 5 Z" fill="#111"/><path d="M1 13 h2 v2 h-2 Z M4.2 13 h2 v2 h-2 Z M7.4 12 h2 v3 h-2 Z M10.6 10 h2 v5 h-2 Z" fill="#1f5478"/></g><path d="M1868 1071.5 H1874 L1871 1068.5 Z" fill="#333"/><g transform="translate(1901,1063)"><path d="M1 7 L9 1.5 L17 6 V9 L9 14 L1 10 Z" fill="#ececec" stroke="#333" stroke-width="0.9"/><path d="M1 7 L9 11.5 L17 6 M9 11.5 V14" fill="none" stroke="#333" stroke-width="0.8"/><circle cx="8" cy="6" r="1.6" fill="none" stroke="#333" stroke-width="0.8"/><path d="M10 6 L13 7.5" stroke="#333" stroke-width="1.2"/></g><rect x="1918" y="1011" width="1" height="15" fill="#888"/><polyline points="613.98,536.33 614.84,535.82 615.72,535.30 616.60,534.78 617.50,534.26 618.40,533.74 619.32,533.21 620.25,532.69 621.19,532.15 622.14,531.62 623.10,531.08 624.08,530.55 625.06,530.00 626.06,529.46 627.06,528.91 628.08,528.36 629.11,527.81 630.15,527.26 631.20,526.70 632.26,526.14 633.34,525.58 634.42,525.02 635.52,524.45 636.62,523.88 637.74,523.31 638.87,522.74 640.01,522.17 641.16,521.59 642.33,521.01 643.50,520.43 644.69,519.85 645.88,519.26 647.09,518.67 648.31,518.09 649.54,517.49 650.78,516.90 652.03,516.31 653.29,515.71 654.56,515.11 655.85,514.51 657.15,513.91 658.45,513.30 659.77,512.70 661.10,512.09 662.44,511.48 663.79,510.87 665.16,510.26 666.53,509.64 667.91,509.03 669.31,508.41 670.72,507.79 672.14,507.17 673.57,506.55 675.01,505.92 676.46,505.30 677.92,504.67 679.40,504.04 680.88,503.41 682.38,502.78 683.88,502.15 685.40,501.52 686.93,500.88 688.47,500.24 690.02,499.61 691.59,498.97 693.16,498.33 694.75,497.69 696.34,497.04 697.95,496.40 699.57,495.76 701.20,495.11 702.84,494.46 704.49,493.82 706.16,493.17 707.83,492.52 709.52,491.87 711.21,491.21 712.92,490.56 714.64,489.91 716.37,489.25 718.11,488.60 719.86,487.94 721.63,487.28 723.40,486.63 725.19,485.97 726.98,485.31 728.79,484.65 730.61,483.99 732.44,483.32 734.28,482.66 736.13,482.00 738.00,481.33 739.87,480.67 741.76,480.01 743.65,479.34 745.56,478.67 747.48,478.01 749.41,477.34 751.35,476.67 753.30,476.01 755.27,475.34 757.24,474.67 759.23,474.00 761.23,473.33 763.23,472.66 765.25,471.99 767.28,471.32 769.32,470.65 771.38,469.98 773.44,469.31 775.52,468.64 777.60,467.96 779.70,467.29 781.81,466.62 783.93,465.95 786.06,465.28 788.20,464.60 790.35,463.93 792.51,463.26 794.69,462.59 796.88,461.92 799.07,461.24 801.28,460.57 803.50,459.90 805.73,459.23 807.97,458.56 810.23,457.89 812.49,457.21 814.76,456.54 817.05,455.87 819.35,455.20 821.66,454.53 823.98,453.86 826.31,453.19 828.65,452.52 831.00,451.85 833.37,451.19 835.74,450.52 838.13,449.85 840.52,449.18 842.93,448.52 845.35,447.85 847.78,447.18 850.23,446.52 852.68,445.86 855.14,445.19 857.62,444.53 860.10,443.87 862.60,443.20 865.11,442.54 867.63,441.88 870.16,441.22 872.70,440.56 875.26,439.91 877.82,439.25 880.40,438.59 882.98,437.94 885.58,437.28 888.19,436.63 890.81,435.98 893.44,435.32 896.08,434.67 898.74,434.02 901.40,433.37 904.08,432.73 906.76,432.08 909.46,431.43 912.17,430.79 914.89,430.15 917.62,429.51 920.36,428.86 923.12,428.22 925.88,427.59 928.66,426.95 931.44,426.31 934.24,425.68 937.05,425.05 939.87,424.42 942.70,423.78 945.54,423.16 948.40,422.53 951.26,421.90 954.14,421.28 957.03,420.66 959.92,420.03 962.83,419.42 965.75,418.80 968.68,418.18 971.63,417.57 974.58,416.95 977.55,416.34 980.52,415.73 983.51,415.12 986.51,414.52 989.52,413.91 992.54,413.31 995.57,412.71 998.61,412.11 1001.66,411.52 1004.73,410.92 1007.81,410.33 1010.89,409.74 1013.99,409.15 1017.10,408.56 1020.22,407.98 1023.35,407.39 1026.50,406.81 1029.65,406.24 1032.81,405.66 1035.99,405.09 1039.18,404.51 1042.38,403.95 1045.59,403.38 1048.81,402.81 1052.04,402.25 1055.28,401.69 1058.54,401.13 1061.80,400.58 1065.08,400.03 1068.36,399.48 1071.66,398.93 1074.97,398.38 1078.29,397.84 1081.62,397.30 1084.97,396.76 1088.32,396.23 1091.69,395.70 1095.06,395.17 1098.45,394.64 1101.85,394.12 1105.26,393.59 1108.68,393.08 1112.11,392.56 1115.56,392.05 1119.01,391.54 1122.48,391.03 1125.95,390.53 1129.44,390.03 1132.94,389.53 1136.45,389.04 1139.97,388.54 1143.50,388.06 1147.05,387.57 1150.60,387.09 1154.17,386.61 1157.74,386.13 1161.33,385.66 1164.93,385.19 1168.54,384.73 1172.16,384.26 1175.79,383.81 1179.44,383.35 1183.09,382.90 1186.76,382.45 1190.43,382.00 1194.12,381.56 1197.82,381.13 1201.53,380.69 1205.25,380.26 1208.98,379.83 1212.73,379.41 1216.48,378.99 1220.25,378.58 1224.03,378.16 1227.81,377.76 1231.61,377.35 1235.42,376.95 1239.24,376.56 1243.08,376.17 1246.92,375.78 1250.78,375.39 1254.64,375.01 1258.52,374.64 1262.41,374.27 1266.31,373.90 1270.22,373.54 1274.14,373.18 1278.07,372.83 1282.01,372.48 1285.97,372.13 1289.94,371.79 1293.91,371.45 1297.90,371.12 1301.90,370.80 1305.91,370.47 1309.93,370.16 1313.97,369.84 1318.01,369.54 1322.06,369.23 1326.13,368.94 1330.21,368.64 1334.30,368.36 1338.40,368.07 1342.51,367.80 1346.63,367.52 1350.76,367.26 1354.91,367.00 1359.06,366.74 1363.23,366.49 1367.40,366.25 1371.59,366.01 1375.79,365.77 1380.00,365.55 1384.22,365.33 1388.46,365.11 1392.70,364.90 1396.96,364.70 1401.22,364.50 1405.50,364.32 1409.79,364.13 1414.09,363.96 1418.40,363.79 1422.72,363.63 1427.06,363.48 1431.40,363.33 1435.76,363.20 1440.12,363.07 1444.50,362.95 1448.89,362.84 1453.29,362.74 1457.70,362.66 1462.12,362.59 1466.56,362.53 1471.00,362.50" fill="none" stroke="#d0021b" stroke-width="2"/><polyline points="581.00,563.00 581.01,562.96 581.02,562.89 581.05,562.79 581.09,562.68 581.14,562.55 581.20,562.41 581.27,562.26 581.36,562.10 581.45,561.92 581.56,561.74 581.67,561.54 581.80,561.34 581.94,561.13 582.09,560.91 582.25,560.68 582.42,560.44 582.61,560.20 582.80,559.95 583.01,559.69 583.23,559.43 583.45,559.15 583.69,558.88 583.94,558.59 584.20,558.30 584.48,558.01 584.76,557.71 585.06,557.40 585.36,557.08 585.68,556.77 586.01,556.44 586.35,556.11 586.70,555.78 587.06,555.44 587.43,555.09 587.81,554.74 588.21,554.39 588.62,554.03 589.03,553.66 589.46,553.29 589.90,552.92 590.35,552.54 590.81,552.16 591.29,551.77 591.77,551.38 592.26,550.98 592.77,550.58 593.29,550.18 593.82,549.77 594.36,549.35 594.91,548.94 595.47,548.52 596.04,548.09 596.63,547.66 597.22,547.23 597.83,546.79 598.44,546.35 599.07,545.91 599.71,545.46 600.36,545.01 601.02,544.56 601.70,544.10 602.38,543.64 603.08,543.17 603.78,542.71 604.50,542.24 605.23,541.76 605.97,541.28 606.72,540.80 607.48,540.32 608.26,539.83 609.04,539.34 609.84,538.84 610.64,538.35 611.46,537.85 612.29,537.34 613.13,536.84 613.98,536.33" fill="none" stroke="#0000c8" stroke-width="2"/><line x1="1471" y1="363" x2="1563" y2="363" stroke="#e0001a" stroke-width="2"/><line x1="602" y1="563.5" x2="1563" y2="563.5" stroke="#b81d2a" stroke-width="1" stroke-dasharray="20 4 4 4" stroke-dashoffset="-23"/><line x1="581" y1="563" x2="602" y2="563" stroke="#c01020" stroke-width="2"/><line x1="1562.5" y1="364" x2="1562.5" y2="563" stroke="#c01a28" stroke-width="1" stroke-dasharray="18 4 4 4"/><line x1="1471" y1="364" x2="1471" y2="563" stroke="#6464d0" stroke-width="1.2" stroke-dasharray="30.5 1.5" stroke-dashoffset="11.5"/><line x1="1471" y1="384" x2="1471" y2="563" stroke="#9a9aaa" stroke-width="1.2" stroke-dasharray="2.5 2.5 4 23"/><line x1="581" y1="563" x2="1471" y2="363" stroke="#6e6e6e" stroke-width="1" stroke-dasharray="20 4 4 4"/><path d="M602 563 A35.8 35.8 0 0 1 614 536" fill="none" stroke="#e01020" stroke-width="2"/><line x1="619" y1="535.6" x2="635" y2="563" stroke="#c01a28" stroke-width="1" stroke-dasharray="5 4 40"/><rect x="330.4" y="931" width="3.2" height="19" fill="#6cc06c" stroke="#1f6a1f" stroke-width="0.8"/><path d="M327.8 931.5 L332 923 L336.2 931.5 Z" fill="#2a7a2a" stroke="#174f17" stroke-width="0.6"/><rect x="336" y="951.2" width="17.5" height="3.2" fill="#f07a7a" stroke="#a01818" stroke-width="0.8"/><path d="M353 948.3 L362 952.8 L353 957.3 Z" fill="#c42020" stroke="#8a1010" stroke-width="0.6"/><circle cx="332" cy="952.8" r="4.3" fill="#1010c0"/><path d="M328.3 912.3 L331.6 916.6 L334.9 912.3 M331.6 916.6 V921" fill="none" stroke="#2a6a2a" stroke-width="1"/><path d="M363.3 948.3 L368 957 M368 948.3 L363.3 957" fill="none" stroke="#b02020" stroke-width="1"/></svg>
<span class="t" style="left:29.4px;top:13.42px;font-size:12.5px;color:#c8282e;font-weight:bold;font-style:italic;transform:scaleX(1.0732)">SOLID</span><span class="t" style="left:70.4px;top:13.42px;font-size:12.5px;color:#c8282e;font-weight:normal;font-style:italic;transform:scaleX(0.8892)">WORKS</span><span class="t" style="left:142.4px;top:12.84px;font-size:12px;color:#1e1e1e;font-weight:normal;transform:scaleX(0.9460)">File</span><span class="t" style="left:176.4px;top:12.84px;font-size:12px;color:#1e1e1e;font-weight:normal;transform:scaleX(1.0151)">Edit</span><span class="t" style="left:212.4px;top:12.84px;font-size:12px;color:#1e1e1e;font-weight:normal;transform:scaleX(1.0079)">View</span><span class="t" style="left:253.4px;top:12.84px;font-size:12px;color:#1e1e1e;font-weight:normal;transform:scaleX(0.9995)">Insert</span><span class="t" style="left:298.4px;top:12.84px;font-size:12px;color:#1e1e1e;font-weight:normal;transform:scaleX(0.9637)">Tools</span><span class="t" style="left:340.4px;top:12.84px;font-size:12px;color:#1e1e1e;font-weight:normal;transform:scaleX(1.0542)">Window</span><span class="t" style="left:1121.9px;top:12.69px;font-size:11px;color:#1e1e1e;font-weight:normal;transform:scaleX(0.9879)">Perfil proyectil.SLDPRT *</span><span class="t" style="left:1560.4px;top:11.69px;font-size:11px;color:#555;font-weight:normal">i</span><span class="t" style="left:13.9px;top:69.69px;font-size:11px;color:#1e1e1e;font-weight:normal;transform:scaleX(1.0447)">Extruded</span><span class="t" style="left:10.9px;top:82.69px;font-size:11px;color:#1e1e1e;font-weight:normal;transform:scaleX(0.9887)">Boss/Base</span><span class="t" style="left:75.9px;top:69.69px;font-size:11px;color:#1e1e1e;font-weight:normal;transform:scaleX(1.0031)">Revolved</span><span class="t" style="left:72.9px;top:82.69px;font-size:11px;color:#1e1e1e;font-weight:normal;transform:scaleX(0.9887)">Boss/Base</span><span class="t" style="left:158.0px;top:43.69px;font-size:11px;color:#1e1e1e;font-weight:normal;transform:scaleX(1.0056)">Swept Boss/Base</span><span class="t" style="left:158.0px;top:69.69px;font-size:11px;color:#1e1e1e;font-weight:normal;transform:scaleX(1.0089)">Lofted Boss/Base</span><span class="t" style="left:158.0px;top:95.69px;font-size:11px;color:#1e1e1e;font-weight:normal;transform:scaleX(1.0221)">Boundary Boss/Base</span><span class="t" style="left:281.1px;top:69.69px;font-size:11px;color:#b3b3b3;font-weight:normal;transform:scaleX(1.0447)">Extruded</span><span class="t" style="left:295.0px;top:82.69px;font-size:11px;color:#b3b3b3;font-weight:normal;transform:scaleX(1.0745)">Cut</span><span class="t" style="left:342.4px;top:62.69px;font-size:11px;color:#b3b3b3;font-weight:normal;transform:scaleX(1.0829)">Hole</span><span class="t" style="left:336.4px;top:75.69px;font-size:11px;color:#b3b3b3;font-weight:normal;transform:scaleX(1.0808)">Wizard</span><span class="t" style="left:382.4px;top:69.69px;font-size:11px;color:#b3b3b3;font-weight:normal;transform:scaleX(1.0031)">Revolved</span><span class="t" style="left:396.4px;top:82.69px;font-size:11px;color:#b3b3b3;font-weight:normal;transform:scaleX(1.0745)">Cut</span><span class="t" style="left:461.4px;top:43.69px;font-size:11px;color:#b3b3b3;font-weight:normal;transform:scaleX(1.0640)">Swept Cut</span><span class="t" style="left:461.4px;top:69.69px;font-size:11px;color:#b3b3b3;font-weight:normal;transform:scaleX(1.0834)">Lofted Cut</span><span class="t" style="left:461.4px;top:95.69px;font-size:11px;color:#b3b3b3;font-weight:normal;transform:scaleX(1.0704)">Boundary Cut</span><span class="t" style="left:550.9px;top:62.69px;font-size:11px;color:#b3b3b3;font-weight:normal;transform:scaleX(1.0975)">Fillet</span><span class="t" style="left:588.4px;top:62.69px;font-size:11px;color:#b3b3b3;font-weight:normal;transform:scaleX(1.0465)">Linear</span><span class="t" style="left:586.1px;top:75.69px;font-size:11px;color:#b3b3b3;font-weight:normal;transform:scaleX(1.0432)">Pattern</span><span class="t" style="left:655.4px;top:43.69px;font-size:11px;color:#b3b3b3;font-weight:normal;transform:scaleX(1.0293)">Rib</span><span class="t" style="left:655.9px;top:69.69px;font-size:11px;color:#b3b3b3;font-weight:normal;transform:scaleX(1.0904)">Draft</span><span class="t" style="left:655.9px;top:95.69px;font-size:11px;color:#b3b3b3;font-weight:normal;transform:scaleX(1.0013)">Shell</span><span class="t" style="left:719.4px;top:43.69px;font-size:11px;color:#b3b3b3;font-weight:normal;transform:scaleX(1.0731)">Wrap</span><span class="t" style="left:719.4px;top:69.69px;font-size:11px;color:#1e1e1e;font-weight:normal;transform:scaleX(1.0667)">Intersect</span><span class="t" style="left:719.4px;top:95.69px;font-size:11px;color:#b3b3b3;font-weight:normal;transform:scaleX(1.1491)">Mirror</span><span class="t" style="left:781.9px;top:62.69px;font-size:11px;color:#1e1e1e;font-weight:normal;transform:scaleX(1.0046)">Reference</span><span class="t" style="left:783.0px;top:75.19px;font-size:11px;color:#1e1e1e;font-weight:normal;transform:scaleX(1.0228)">Geometry</span><span class="t" style="left:843.0px;top:62.69px;font-size:11px;color:#1e1e1e;font-weight:normal;transform:scaleX(0.9586)">Curves</span><span class="t" style="left:889.9px;top:69.39px;font-size:11px;color:#1e1e1e;font-weight:normal;transform:scaleX(1.0617)">Instant3D</span><span class="t" style="left:74.0px;top:121.54px;font-size:12px;color:#1e1e1e;font-weight:normal;transform:scaleX(0.9540)">Sketch</span><span class="t" style="left:127.4px;top:121.54px;font-size:12px;color:#1e1e1e;font-weight:normal;transform:scaleX(1.0396)">Markup</span><span class="t" style="left:184.8px;top:121.54px;font-size:12px;color:#1e1e1e;font-weight:normal;transform:scaleX(0.9550)">Evaluate</span><span class="t" style="left:244.9px;top:121.54px;font-size:12px;color:#1e1e1e;font-weight:normal;transform:scaleX(0.9870)">MBD Dimensions</span><span class="t" style="left:351.4px;top:121.54px;font-size:12px;color:#1e1e1e;font-weight:normal;transform:scaleX(0.9412)">SOLIDWORKS Add-Ins</span><span class="t" style="left:491.4px;top:121.54px;font-size:12px;color:#1e1e1e;font-weight:normal;transform:scaleX(1.0011)">MBD</span><span class="t" style="left:540.7px;top:121.54px;font-size:12px;color:#1e1e1e;font-weight:normal;transform:scaleX(0.9722)">Analysis Preparation</span><span class="t" style="left:663.4px;top:121.54px;font-size:12px;color:#1e1e1e;font-weight:normal;transform:scaleX(1.0129)">Flow Simulation</span><span class="t" style="left:8.4px;top:121.54px;font-size:12px;color:#1e1e1e;font-weight:bold;transform:scaleX(0.9594)">Features</span><span class="t" style="left:26.7px;top:220.64px;font-size:12px;color:#1e1e1e;font-weight:normal;transform:scaleX(0.9780)">Perfil proyectil  (Default&lt; &lt;Default&gt;_Display State</span><span class="t" style="left:49.9px;top:242.64px;font-size:12px;color:#1e1e1e;font-weight:normal;transform:scaleX(1.0176)">History</span><span class="t" style="left:49.9px;top:264.64px;font-size:12px;color:#1e1e1e;font-weight:normal">Sensors</span><span class="t" style="left:49.9px;top:286.64px;font-size:12px;color:#1e1e1e;font-weight:normal">Annotations</span><span class="t" style="left:49.9px;top:308.64px;font-size:12px;color:#1e1e1e;font-weight:normal">Markups</span><span class="t" style="left:49.9px;top:330.64px;font-size:12px;color:#1e1e1e;font-weight:normal">Equations</span><span class="t" style="left:73.4px;top:352.64px;font-size:12px;color:#1e1e1e;font-weight:normal">&quot;L&quot;=665mm</span><span class="t" style="left:73.4px;top:374.64px;font-size:12px;color:#1e1e1e;font-weight:normal">&quot;R&quot;=150mm</span><span class="t" style="left:73.4px;top:396.64px;font-size:12px;color:#1e1e1e;font-weight:normal">&quot;C&quot;=0.333333</span><span class="t" style="left:49.9px;top:418.64px;font-size:12px;color:#1e1e1e;font-weight:normal">Material &lt;not specified&gt;</span><span class="t" style="left:49.9px;top:440.64px;font-size:12px;color:#1e1e1e;font-weight:normal">Front Plane</span><span class="t" style="left:49.9px;top:462.64px;font-size:12px;color:#1e1e1e;font-weight:normal">Top Plane</span><span class="t" style="left:49.9px;top:484.64px;font-size:12px;color:#1e1e1e;font-weight:normal">Right Plane</span><span class="t" style="left:49.9px;top:506.64px;font-size:12px;color:#1e1e1e;font-weight:normal">Origin</span><span class="t" style="left:49.9px;top:528.64px;font-size:12px;color:#1e1e1e;font-weight:normal">Parametros</span><span class="t" style="left:49.9px;top:550.64px;font-size:12px;color:#1e1e1e;font-weight:normal">Curva LV Haak</span><span class="t" style="left:49.9px;top:572.64px;font-size:12px;color:#8c8c8c;font-weight:normal">Surface-Revolve1</span><span class="t" style="left:73.4px;top:594.64px;font-size:12px;color:#1e1e1e;font-weight:normal">Perfil proyectil</span><span class="t" style="left:302.4px;top:995.00px;font-size:13px;color:#000;font-weight:bold;transform:scaleX(0.9927)">*Front</span><span class="t" style="left:103.9px;top:1011.84px;font-size:12px;color:#000;font-weight:bold;transform:scaleX(1.0239)">Model</span><span class="t" style="left:158.4px;top:1011.84px;font-size:12px;color:#1e1e1e;font-weight:normal;transform:scaleX(0.9511)">3D Views</span><span class="t" style="left:225.4px;top:1011.84px;font-size:12px;color:#1e1e1e;font-weight:normal;transform:scaleX(1.0119)">Motion Study 1</span><span class="t" style="left:0.4px;top:1063.34px;font-size:12px;color:#1e1e1e;font-weight:normal;transform:scaleX(0.9208)">SOLIDWORKS Premium 2020 SP4.0</span><span class="t" style="left:1813.8px;top:1063.84px;font-size:12px;color:#1e1e1e;font-weight:normal;transform:scaleX(0.9774)">MMGS</span>
</body></html>
